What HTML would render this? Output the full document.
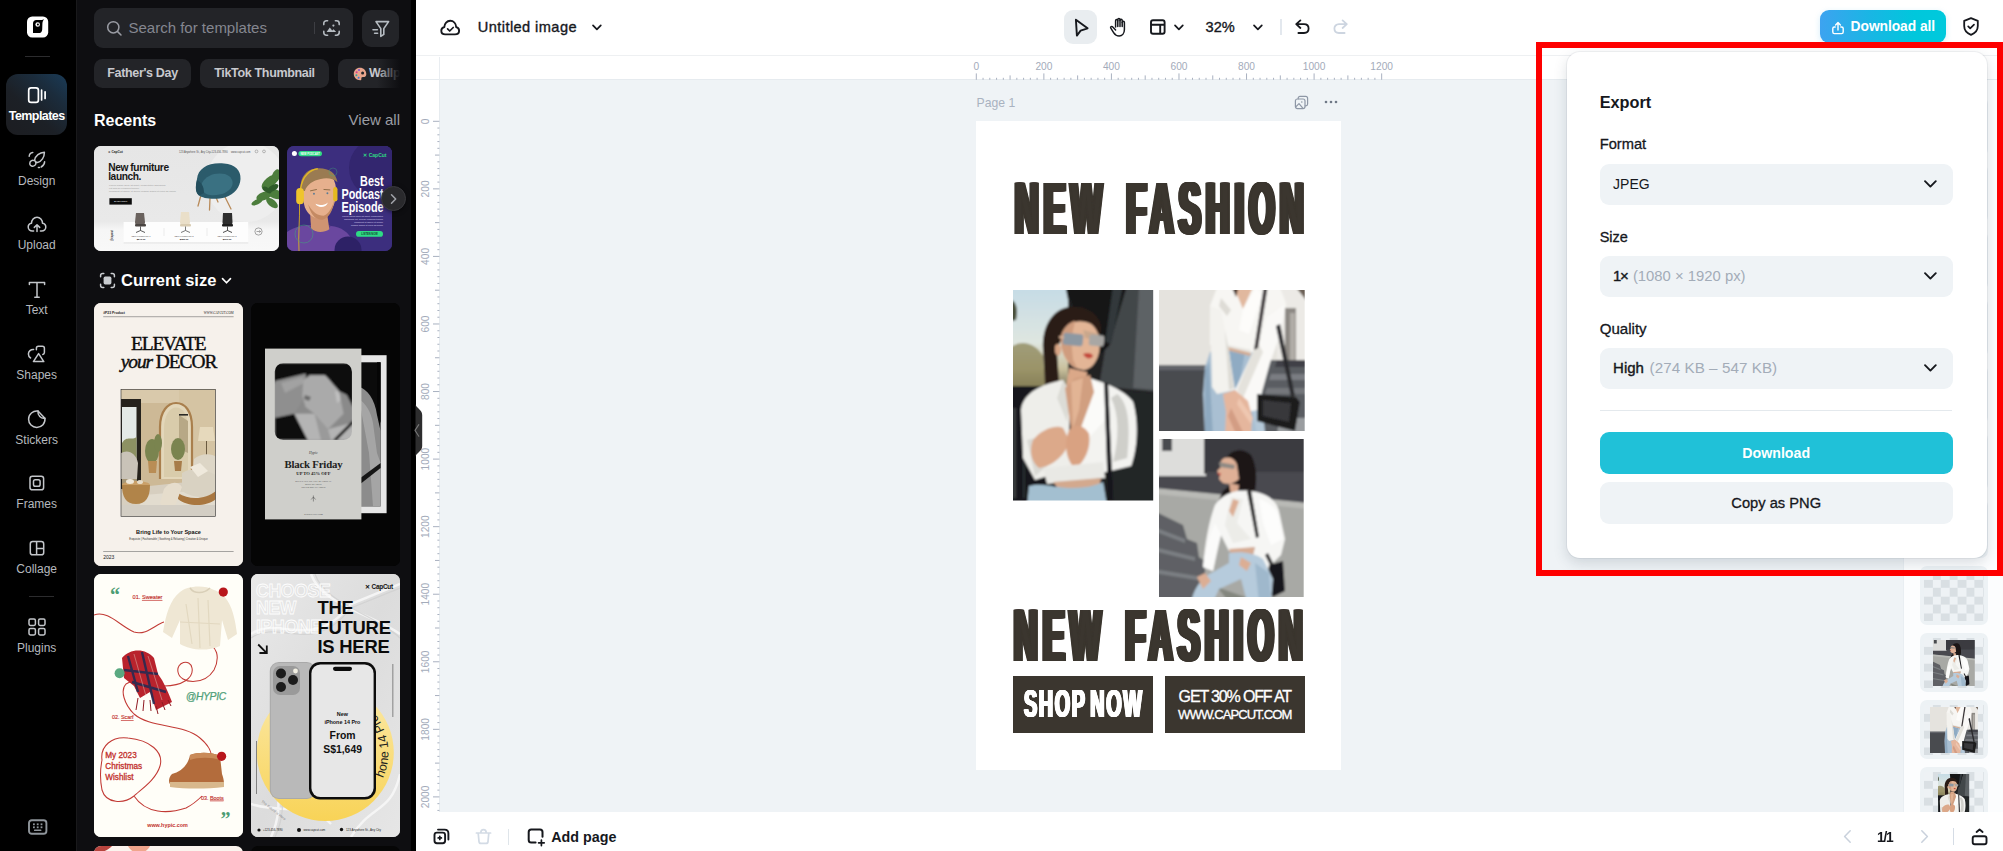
<!DOCTYPE html>
<html lang="en">
<head>
<meta charset="utf-8">
<title>Untitled image</title>
<style>
*{box-sizing:border-box;margin:0;padding:0}
html,body{width:2003px;height:851px;overflow:hidden;background:#fff}
body{position:relative;font-family:"Liberation Sans",sans-serif;color:#14161a;-webkit-font-smoothing:antialiased}
.abs{position:absolute}
svg{display:block;overflow:visible}
/* ---------- left rail ---------- */
#rail{position:absolute;left:0;top:0;width:77px;height:851px;background:#000;border-right:1px solid #19191b}
#rail .logo{position:absolute;left:27px;top:16px;width:21px;height:22px;border-radius:5px;background:#fff}
#rail .hr{position:absolute;left:25px;width:25px;height:1px;background:#2c2c2e}
.nav{position:absolute;left:0;width:73.4px;height:61px;text-align:center}
.nav .lb{position:absolute;left:0;width:73.4px;top:35px;font-size:12px;line-height:14px;color:#b6b9be;white-space:nowrap}
.nav.on{left:6px;width:61px;border-radius:12px;background:linear-gradient(222deg,#1a3b57 0%,#1b2c3c 28%,#1c2026 60%,#1c1d21 100%)}
.nav.on .lb{left:-6px;top:35px;color:#fff;font-weight:bold;font-size:12.5px;letter-spacing:-0.55px}
/* ---------- templates panel ---------- */
#panel{position:absolute;left:77px;top:0;width:339px;height:851px;background:#0e0e11;overflow:hidden}
#panel .search{position:absolute;left:17px;top:8.4px;width:259px;height:39.2px;border-radius:9px;background:#232428}
#panel .search .ph{position:absolute;left:34.5px;top:10px;font-size:15px;line-height:19px;color:#858790}
#panel .filter{position:absolute;left:284.6px;top:9.5px;width:37.6px;height:37.4px;border-radius:9px;background:#232428}
.chip{position:absolute;top:58.5px;height:29px;border-radius:8.5px;background:#232428;color:#c8c9ce;font-size:12.5px;font-weight:bold;line-height:29px;text-align:center;white-space:nowrap;letter-spacing:-0.33px}
.card{position:absolute;border-radius:7px;overflow:hidden}
/* ---------- main ---------- */
#topbar{position:absolute;left:416px;top:0;width:1587px;height:56px;background:#fff;border-bottom:1px solid #eef0f2}
#hruler{position:absolute;left:416px;top:56px;width:1587px;height:24px;background:#fff;border-bottom:1px solid #e6ebef}
#vruler{position:absolute;left:415.500px;top:80px;width:24px;height:732px;background:#fff;border-right:1px solid #e6ebef}
#canvas{position:absolute;left:440px;top:80px;width:1563px;height:732px;background:#eff3f6}
#artboard{position:absolute;left:976.2px;top:121.3px;width:364.9px;height:648.3px;background:#fff;overflow:hidden}
.tt{color:#16181d;-webkit-text-stroke:.35px #16181d;white-space:nowrap}
#bottombar{position:absolute;left:416px;top:812px;width:1587px;height:39px;background:#fff}
#thumbs{position:absolute;left:1903px;top:80px;width:100px;height:732px;background:#fcfdfe;border-left:1px solid #e9eef2;overflow:hidden}
.th{position:absolute;left:15.600px;width:68.600px;height:58.400px;border-radius:7px;background:#edf2f5;overflow:hidden}
.th .ck{position:absolute;left:4.200px;top:4.600px;width:60.400px;height:50.400px;background-color:#eef2f5;background-image:conic-gradient(#d9dfe3 25%,transparent 0 50%,#d9dfe3 0 75%,transparent 0);background-size:16.800px 16.800px}
.hl{position:absolute;font-weight:bold;font-size:75px;line-height:76px;letter-spacing:12.2px;word-spacing:11.4px;color:#3b362f;white-space:nowrap;transform:scaleX(0.4356);transform-origin:0 0;text-shadow:1.0px 0 0 #3b362f,-1.0px 0 0 #3b362f,2.0px 0 0 #3b362f,-2.0px 0 0 #3b362f,3.0px 0 0 #3b362f,-3.0px 0 0 #3b362f,4.0px 0 0 #3b362f,-4.0px 0 0 #3b362f,5.0px 0 0 #3b362f,-5.0px 0 0 #3b362f,6.0px 0 0 #3b362f,-6.0px 0 0 #3b362f;padding-left:6.6px}
.sn{position:absolute;font-weight:bold;font-size:39.5px;line-height:42px;letter-spacing:3.3px;word-spacing:-6.0px;color:#fff;white-space:nowrap;transform:scaleX(0.5);transform-origin:0 0;text-shadow:0.5px 0 0 #fff,-0.5px 0 0 #fff,1.0px 0 0 #fff,-1.0px 0 0 #fff,1.5px 0 0 #fff,-1.5px 0 0 #fff,2.0px 0 0 #fff,-2.0px 0 0 #fff;padding-left:2.0px}
/* ---------- export popover ---------- */
#pop{position:absolute;left:1566.500px;top:52.200px;width:420.300px;height:505.400px;border-radius:13px;background:#fff;box-shadow:0 5px 14px rgba(40,60,80,.17),0 0 0 1px rgba(20,40,60,.05)}
#pop .h{position:absolute;font-weight:bold;color:#16181d;white-space:nowrap}
#pop .l{position:absolute;left:33.200px;line-height:18px;color:#16181d;-webkit-text-stroke:.3px #16181d;white-space:nowrap}
#pop .sel{position:absolute;left:33.200px;width:353px;height:41.400px;border-radius:9px;background:#eff3f6;font-size:15px;line-height:40.200px;padding-left:13.400px;color:#16181d;white-space:nowrap}
#pop .sel b{font-weight:normal;-webkit-text-stroke:.4px #16181d}
#pop .sel i{font-style:normal;color:#a3acb8}
#pop .sel svg{position:absolute;right:14.500px;top:14.700px}
#pop .btn{position:absolute;left:33.200px;width:353px;border-radius:9px;text-align:center;line-height:43.600px;white-space:nowrap}
#red{position:absolute;left:1536px;top:42.300px;width:467.200px;height:534px;border:6px solid #fe0000;border-right-width:6.400px;pointer-events:none}
</style>
</head>
<body>

<!-- ================= LEFT RAIL ================= -->
<div id="rail">
  <svg class="abs" style="left:27px;top:16px" width="22" height="22" viewBox="0 0 22 22">
    <rect x="0" y="0.5" width="21.2" height="21" rx="5.2" fill="#fff"/>
    <path d="M6 17 L6 7.6 C6 5.4 7.3 4 9.4 4 L14.6 4 C15.6 4 16.4 3.6 17.1 3.1 C16.2 4.5 15.6 5.6 15.4 7.4 L15.2 13.4 C15.1 15.8 13.8 17 11.6 17 Z" fill="#000"/>
    <circle cx="10.7" cy="8.5" r="2.3" fill="#fff"/><circle cx="10.9" cy="8.5" r="1" fill="#000"/>
  </svg>
  <div class="hr" style="top:56px"></div>

  <div class="nav on" style="top:74px"><div class="lb">Templates</div></div>
  <svg class="abs ni" style="left:27px;top:85px" width="20" height="20" viewBox="0 0 20 20" fill="none" stroke="#fff" stroke-width="1.7" stroke-linecap="round">
    <rect x="1.7" y="2.9" width="9.7" height="14.4" rx="2.4"/><path d="M14.6 5.2V15M18.1 6.8V13.4"/>
  </svg>

  <div class="nav" style="top:138.7px"><div class="lb">Design</div></div>
  <svg class="abs ni" style="left:26.7px;top:149.7px" width="20" height="20" viewBox="0 0 20 20" fill="none" stroke="#c3c6ca" stroke-width="1.5" stroke-linecap="round" stroke-linejoin="round">
    <path d="M17.4 2.2C12.6 2.4 8.2 5.8 7.6 10.2C8 11.6 9 12.4 10.4 12.6C14.6 11.6 17.4 7.2 17.4 2.2Z"/>
    <path d="M7.2 10.6C5 9.8 2.8 11.2 2.8 13.4C2.8 15.2 4.2 16.4 5.8 16.2C8 16 9.4 14.2 8.8 12.2"/>
    <path d="M2.2 6.2C2.4 4 3.6 2.6 5.8 2.4M17.6 11.8C17.6 14.2 16.2 15.8 14.2 17M12.4 17.6L11.4 17.6"/>
  </svg>

  <div class="nav" style="top:203.4px"><div class="lb">Upload</div></div>
  <svg class="abs ni" style="left:26.7px;top:214.4px" width="20" height="20" viewBox="0 0 20 20" fill="none" stroke="#c3c6ca" stroke-width="1.5" stroke-linecap="round" stroke-linejoin="round">
    <path d="M6.6 17H5.4C3 17 1.2 15.3 1.2 13.1C1.2 11.2 2.6 9.6 4.5 9.3C4.5 5.9 6.9 3.2 10 3.2C13.1 3.2 15.5 5.9 15.5 9.3C17.4 9.6 18.8 11.2 18.8 13.1C18.8 15.3 17 17 14.6 17H13.4"/>
    <path d="M10 17.6V11M7.3 13.4L10 10.7L12.7 13.4"/>
  </svg>

  <div class="nav" style="top:268.1px"><div class="lb">Text</div></div>
  <svg class="abs ni" style="left:26.7px;top:279.1px" width="20" height="20" viewBox="0 0 20 20" fill="none" stroke="#c3c6ca" stroke-width="1.5" stroke-linecap="round" stroke-linejoin="round">
    <path d="M2.4 5.6V3.4H17.6V5.6M10 3.4V18M7.8 18.3H12.2"/>
  </svg>

  <div class="nav" style="top:332.8px"><div class="lb">Shapes</div></div>
  <svg class="abs ni" style="left:26.7px;top:343.8px" width="20" height="20" viewBox="0 0 20 20" fill="none" stroke="#c3c6ca" stroke-width="1.5" stroke-linecap="round" stroke-linejoin="round">
    <path d="M9.4 5.8V4.2C9.4 3 10.2 2.2 11.4 2.2H15.4C16.6 2.2 17.4 3 17.4 4.2V8.4C17.4 9.6 16.8 10.2 15.8 10.4"/>
    <path d="M6.6 5.4C3.8 5.2 1.4 7.2 1.4 10C1.4 11.8 2.2 13.2 3.6 14"/>
    <path d="M11.6 9.6L16.8 17.6H6.4Z"/>
  </svg>

  <div class="nav" style="top:397.5px"><div class="lb">Stickers</div></div>
  <svg class="abs ni" style="left:26.7px;top:408.5px" width="20" height="20" viewBox="0 0 20 20" fill="none" stroke="#c3c6ca" stroke-width="1.5" stroke-linecap="round" stroke-linejoin="round">
    <path d="M11 2.1C6 1.4 1.6 5.2 1.6 10.2C1.6 14.8 5.2 18.4 9.8 18.4C14.8 18.4 18.6 14.2 17.9 9.2"/>
    <path d="M11 2.1L17.9 9.2C14 10 10.4 6.4 11 2.1Z"/>
  </svg>

  <div class="nav" style="top:462.2px"><div class="lb">Frames</div></div>
  <svg class="abs ni" style="left:26.7px;top:473.2px" width="20" height="20" viewBox="0 0 20 20" fill="none" stroke="#c3c6ca" stroke-width="1.5" stroke-linejoin="round">
    <rect x="3" y="3.2" width="13.6" height="13.6" rx="2.4"/><rect x="6.5" y="6.7" width="6.6" height="6.6" rx="1.8"/>
  </svg>

  <div class="nav" style="top:526.9px"><div class="lb">Collage</div></div>
  <svg class="abs ni" style="left:26.7px;top:537.9px" width="20" height="20" viewBox="0 0 20 20" fill="none" stroke="#c3c6ca" stroke-width="1.5" stroke-linejoin="round">
    <rect x="3.3" y="3.6" width="13.4" height="13.2" rx="2.4"/><path d="M9.6 3.6V16.8M9.6 10.4H16.7"/>
  </svg>

  <div class="hr" style="top:596px;left:29px"></div>

  <div class="nav" style="top:604.2px"><div class="lb" style="top:36.400px">Plugins</div></div>
  <svg class="abs ni" style="left:26.7px;top:616.5px" width="20" height="20" viewBox="0 0 20 20" fill="none" stroke="#c3c6ca" stroke-width="1.5" stroke-linejoin="round">
    <rect x="2" y="2" width="6.4" height="6.4" rx="1.4"/><rect x="11.6" y="2" width="6.4" height="6.4" rx="1.4"/><rect x="2" y="11.6" width="6.4" height="6.4" rx="1.4"/><rect x="11.6" y="11.6" width="6.4" height="6.4" rx="1.4"/>
  </svg>

  <svg class="abs" style="left:27px;top:818px" width="22" height="18" viewBox="0 0 22 18" fill="none" stroke="#8f959b" stroke-width="1.9" stroke-linejoin="round">
    <rect x="2" y="2.2" width="17.4" height="13.6" rx="2.8"/>
    <g stroke="none" fill="#8f959b"><rect x="6" y="5.4" width="1.8" height="1.8"/><rect x="9.8" y="5.4" width="1.8" height="1.8"/><rect x="13.6" y="5.4" width="1.8" height="1.8"/><rect x="6" y="8.4" width="1.8" height="1.8"/><rect x="9.8" y="8.4" width="1.8" height="1.8"/><rect x="13.6" y="8.4" width="1.8" height="1.8"/><rect x="7" y="11.4" width="7.4" height="1.6" rx=".6"/></g>
  </svg>
</div>

<!-- ================= TEMPLATES PANEL ================= -->
<div id="panel">
  <div class="search"><div class="ph">Search for templates</div>
    <svg class="abs" style="left:11px;top:11px" width="20" height="20" viewBox="0 0 20 20" fill="none" stroke="#9a9ca4" stroke-width="1.5" stroke-linecap="round"><circle cx="8.3" cy="8.3" r="5.6"/><path d="M12.6 12.6L16 16"/></svg>
    <div class="abs" style="left:220px;top:14px;width:1px;height:12px;background:#3d3e43"></div>
    <svg class="abs" style="left:228px;top:11px" width="19" height="19" viewBox="0 0 19 19" fill="none" stroke="#b6bcc2" stroke-width="1.6" stroke-linecap="round"><path d="M1.8 5.6V4.4C1.8 2.8 2.8 1.8 4.4 1.8H5.6M13.4 1.8H14.6C16.2 1.8 17.2 2.8 17.2 4.4V5.6M17.2 12.4V13.6C17.2 15.2 16.2 16.2 14.6 16.2H13.4M5.6 16.2H4.4C2.8 16.2 1.8 15.2 1.8 13.6V12.4"/><circle cx="11.4" cy="6.6" r="1.1" fill="#b6bcc2" stroke="none"/><path d="M4.6 13L7.8 8.6L10.2 11.4L11.6 10.2L14.2 13Z" fill="#b6bcc2" stroke="none"/></svg>
  </div>
  <div class="filter">
    <svg class="abs" style="left:9px;top:9px" width="20" height="20" viewBox="0 0 20 20" fill="none" stroke="#b6bcc2" stroke-width="1.6" stroke-linecap="round" stroke-linejoin="round"><path d="M5 2.6H17.6L12.8 9.6V15.4L9.8 17.4V9.6Z"/><path d="M2 10.8H6.4M3.6 14.2H6.6"/></svg>
  </div>
  <div class="chip" style="left:17px;width:97px">Father's Day</div>
  <div class="chip" style="left:123px;width:129px">TikTok Thumbnail</div>
  <div class="chip" style="left:261px;width:90px;text-align:left;padding-left:31px">Wallpaper
    <svg class="abs" style="left:15px;top:8px" width="14" height="14" viewBox="0 0 14 14"><path d="M7 .8C3.4.8.8 3.5.8 7s2.800 6.200 6.300 6.200c1 0 1.500-.7 1.300-1.500-.3-1 .3-1.800 1.300-1.800h1.500c1.400 0 2.100-1.200 2.100-2.900C13.300 3.500 10.500.8 7 .8z" fill="#e9a58c"/><circle cx="9.600" cy="6" r="1.500" fill="#232428"/><circle cx="3.600" cy="5.200" r="1" fill="#d43f8d"/><circle cx="6" cy="3" r="1" fill="#7b4fd0"/><circle cx="3.400" cy="8.300" r="1" fill="#2aa6a0"/><circle cx="5.600" cy="10.800" r="1" fill="#3d7bd8"/></svg>
  </div>
  <div class="abs" style="left:300px;top:56px;width:39px;height:34px;background:linear-gradient(90deg,rgba(14,14,17,0) 0,#0e0e11 23px)"></div>
  <div class="abs" style="left:17px;top:111px;font-size:16px;font-weight:bold;color:#fff;line-height:20px">Recents</div>
  <div class="abs" style="right:16px;top:111px;font-size:15px;color:#9b9da4;line-height:18px">View all</div>
  <div class="card" id="rc1" style="left:17px;top:146px;width:185.4px;height:105px;background:#e9e9e9">
  <svg width="186" height="105" viewBox="0 0 186 105" font-family="Liberation Sans, sans-serif">
    <defs><linearGradient id="g1" x1="0" y1="0" x2="0" y2="1"><stop offset="0" stop-color="#e6e6e6"/><stop offset=".72" stop-color="#e9e9e9"/><stop offset=".8" stop-color="#f6f6f6"/><stop offset="1" stop-color="#f8f8f8"/></linearGradient></defs>
    <rect width="186" height="105" fill="url(#g1)"/>
    <circle cx="152" cy="36" r="40" fill="#eeeeee"/>
    <text x="13.500" y="7.200" font-size="3.200" font-weight="bold" fill="#222">✕ CapCut</text>
    <text x="85" y="7" font-size="2.600" fill="#555">123 Anywhere St., Any City</text><text x="116" y="7" font-size="2.600" fill="#555">+123-456-7890</text><text x="137" y="7" font-size="2.600" fill="#555">www.capcut.com</text>
    <circle cx="162.500" cy="5.400" r="1.400" fill="none" stroke="#666" stroke-width=".4"/><circle cx="170" cy="5.400" r="1.400" fill="none" stroke="#666" stroke-width=".4"/>
    <text x="14.200" y="25.400" font-size="10.200" font-weight="bold" fill="#161616" letter-spacing="-.4">New furniture</text>
    <text x="14.200" y="34.400" font-size="10.200" font-weight="bold" fill="#161616" letter-spacing="-.4">launch.</text>
    <g fill="#9a9a9a" font-size="2.500"><text x="15" y="40">Lorem ipsum dolor sit amet, consectetur adipiscing</text><text x="15" y="43">elit sed do eiusmod tempor</text><text x="15" y="46">incididunt ut labore et dolore magna aliqua ut enim ad minim</text></g>
    <rect x="15.400" y="52.200" width="22.400" height="6.400" fill="#0c0c0c"/><text x="26.600" y="56.400" font-size="2.400" fill="#fff" text-anchor="middle">SHOP NOW</text>
    <!-- armchair -->
    <g stroke="#b98b5a" stroke-width="1.300" stroke-linecap="round"><path d="M107 49L104 60M116 52L115.500 64M131 51L137 63M121 49L124 56"/></g>
    <path d="M103 33C104 22 115 16 130 17.500C141 18.500 147 24 146.500 33C146 41 141 48 131 51.500C122 54 109 53 104.500 49C100.500 45 102 39 103 33Z" fill="#2b5b6b"/>
    <path d="M108 37C112 29 122 26 131 28C137 30 140 35 138 40C135 47 125 50 116 49C109 48 106 43 108 37Z" fill="#3a7182"/>
    <path d="M103 34C107 36 110 40 110 47L105 49.500C101 46 101.500 39 103 34Z" fill="#234e5d"/>
    <!-- plant -->
    <g fill="#4c7d3c"><ellipse cx="176" cy="36" rx="10" ry="5" transform="rotate(-40 176 36)"/><ellipse cx="181" cy="48" rx="9" ry="4.500" transform="rotate(20 181 48)"/><ellipse cx="170" cy="50" rx="8" ry="4" transform="rotate(-20 170 50)"/><ellipse cx="182" cy="30" rx="7" ry="4" transform="rotate(-70 182 30)"/><ellipse cx="163" cy="56" rx="6" ry="2.600" transform="rotate(-25 163 56)"/><ellipse cx="178" cy="57" rx="7" ry="3.500" transform="rotate(40 178 57)"/></g>
    <g fill="#2f5c2a"><ellipse cx="179" cy="42" rx="6" ry="3" transform="rotate(-30 179 42)"/><ellipse cx="173" cy="44" rx="5" ry="2.400" transform="rotate(30 173 44)"/></g>
    <!-- product strip -->
    <rect x="29.600" y="76" width="124.600" height="20.400" fill="#fdfdfd"/>
    <rect x="29.600" y="96.400" width="124.600" height="1" fill="#dcdcdc" opacity=".7"/>
    <path d="M70 82V90M113 82V90" stroke="#d8d8d8" stroke-width=".5"/>
    <g><path d="M42 67h8l1 9c0 2-1 3.500-5 3.500s-5-1.500-5-3.500z" fill="#6a625e"/><rect x="41" y="78" width="11" height="2.600" rx="1" fill="#4a4542"/><path d="M46.500 80.500v4M42 86.500l4.500-2 4.500 2" stroke="#333" stroke-width=".8" fill="none"/></g>
    <g><path d="M87 66h8l1 10c0 2-1 3.500-5 3.500s-5-1.500-5-3.500z" fill="#eadfc9"/><rect x="86" y="78" width="11" height="2.600" rx="1" fill="#d9ccb2"/><path d="M91.500 80.500v4M87 86.500l4.500-2 4.500 2" stroke="#555" stroke-width=".8" fill="none"/></g>
    <g><path d="M129 67h9l.5 9c0 2-1 3.500-5 3.500s-5-1.500-5-3.500z" fill="#2e2e2e"/><rect x="128" y="78" width="11" height="2.600" rx="1" fill="#1d1d1d"/><path d="M133.500 80.500v4M129 86.500l4.500-2 4.500 2" stroke="#222" stroke-width=".8" fill="none"/></g>
    <g font-size="2.300" fill="#555" text-anchor="middle"><text x="47" y="90.500">NEW PRODUCT 1</text><text x="90" y="90.500">NEW PRODUCT 2</text><text x="133" y="90.500">NEW PRODUCT 3</text></g>
    <g font-size="2.400" fill="#111" font-weight="bold" text-anchor="middle"><text x="47" y="93.800">$240.99</text><text x="90" y="93.800">$180.99</text><text x="133" y="93.800">$199.99</text></g>
    <circle cx="164.500" cy="85.500" r="3.600" fill="none" stroke="#555" stroke-width=".5"/><path d="M162.500 85.500h4M165.300 84.300l1.200 1.200-1.200 1.200" stroke="#555" stroke-width=".5" fill="none"/>
    <text transform="translate(18.500 95) rotate(-90)" font-size="2.600" font-weight="bold" fill="#222">@capcut</text>
  </svg></div>
  <div class="card" id="rc2" style="left:210.400px;top:146px;width:104.800px;height:105px;background:#3b2d7d">
  <svg width="105" height="105" viewBox="0 0 105 105" font-family="Liberation Sans, sans-serif">
    <rect width="105" height="105" fill="#3c2e7e"/>
    <circle cx="92" cy="22" r="30" fill="#33266f"/>
    
    <!-- shirt -->
    <path d="M0 86C8 80 18 79 26 79L44 80C54 81 62 86 66 96L68 105H0Z" fill="#6a479f"/>
    <path d="M22 80C28 86 38 86 44 80L40 78L26 78Z" fill="#5a3b8a"/>
    <g transform="translate(2 6.500) scale(.96)">
    <!-- neck/face -->
    <path d="M22 64L40 66L42 80C36 84 28 84 23 79Z" fill="#cf9472"/>
    <path d="M14 40C13 27 21 20 31 20C43 20 50 28 49 42C48.500 54 44 64 36 68C29 71 20 66 16.500 57C15 52 14.300 46 14 40Z" fill="#e6b08d"/>
    <path d="M13 40C10 28 17 17 30 16.500C41 16 49 21 50.500 31C46 27 40 26 33 27.500C25 29 19 33 16.500 40Z" fill="#9a7b52"/>
    <path d="M20 54C24 62 30 66 36 66C41 64 45 58 47 50C46 60 42 68 35 70C27 71 22 63 20 54Z" fill="#c48a63"/>
    <path d="M27.500 53.500C31 55.500 37 55 40.500 52C39 57.500 30 58.500 27.500 53.500Z" fill="#fff"/>
    <path d="M22 40l7-1.500M36 38.500l7 .5" stroke="#8a6a45" stroke-width="1" fill="none"/>
    <circle cx="26" cy="43" r="1" fill="#5b7c96"/><circle cx="40" cy="42.500" r="1" fill="#5b7c96"/>
    <!-- headphones -->
    <path d="M12 38C14 24 22 18 30 17" fill="none" stroke="#e0b628" stroke-width="1.600"/>
    <rect x="7.500" y="37" width="8" height="17" rx="4" fill="#efc42c"/>
    <rect x="46" y="36" width="4.500" height="15" rx="2.200" fill="#e5b820"/>
    </g>
    <circle cx="61" cy="104" r="13.500" fill="#2d2166"/>
    <path d="M12.500 58C13 72 11 90 12 105" fill="none" stroke="#d9b022" stroke-width=".9"/>
    <circle cx="17" cy="88" r="9" fill="none" stroke="#3fae7a" stroke-width=".6" opacity=".8"/>
    <circle cx="46" cy="26" r="4" fill="none" stroke="#3fae7a" stroke-width=".5" opacity=".7"/>
    <!-- text -->
    <circle cx="7.400" cy="7.600" r="2.500" fill="#fff"/><rect x="11.400" y="5" width="23.600" height="5.200" rx="2.600" fill="#2edb84"/>
    <text x="23.200" y="8.800" font-size="2.600" fill="#fff" text-anchor="middle" font-weight="bold">NEW PODCAST</text>
    <text x="99.500" y="10.600" font-size="5" font-weight="bold" fill="#2edb84" text-anchor="end">✕ CapCut</text>
    <g fill="#fff" font-weight="bold" font-size="15.500" text-anchor="end" transform="translate(96.600 0) scale(.7 1)"><text x="0" y="39.800">Best</text><text x="0" y="53">Podcast</text><text x="0" y="66.200">Episode</text></g>
    <g fill="#d8d2ee" font-size="2.300" text-anchor="end"><text x="96" y="71">Lorem ipsum dolor sit amet, consectetur</text><text x="96" y="74">adipiscing elit, sed do eiusmod tempor</text><text x="96" y="77">incididunt ut labore et dolore</text><text x="96" y="80">magna aliqua ut enim ad minim</text></g>
    <rect x="69" y="85" width="27" height="5.800" rx="2.900" fill="#2edb84"/><text x="82.500" y="89.100" font-size="2.600" fill="#143" text-anchor="middle" font-weight="bold">LISTEN NOW</text>
  </svg></div>
  <div class="abs" style="left:303.500px;top:186px;width:25px;height:25px;border-radius:50%;background:#2a2a2d;border:1px solid #3a3a3e;box-shadow:0 1px 4px rgba(0,0,0,.5)">
    <svg class="abs" style="left:7.500px;top:5.500px" width="9" height="12" viewBox="0 0 9 12" fill="none" stroke="#a2a4aa" stroke-width="1.500" stroke-linecap="round" stroke-linejoin="round"><path d="M2.500 1.800L6.700 6L2.500 10.200"/></svg>
  </div>
  <svg class="abs" style="left:21.500px;top:272px" width="17" height="17" viewBox="0 0 17 17" fill="none" stroke="#c9ccd0" stroke-width="1.500" stroke-linecap="round"><path d="M1.600 4.800V3.600C1.600 2.400 2.400 1.600 3.600 1.600H4.800M12.200 1.600H13.400C14.600 1.600 15.400 2.400 15.400 3.600V4.800M15.400 12.200V13.400C15.400 14.600 14.600 15.400 13.400 15.400H12.200M4.800 15.400H3.600C2.400 15.400 1.600 14.600 1.600 13.400V12.200"/><rect x="4.600" y="4.600" width="7.800" height="7.800" rx="1.600" fill="#c9ccd0" stroke="none"/></svg>
  <svg class="abs" style="left:143.500px;top:276.500px" width="11" height="8" viewBox="0 0 11 8" fill="none" stroke="#fff" stroke-width="1.600" stroke-linecap="round" stroke-linejoin="round"><path d="M1.500 1.600L5.500 5.800L9.500 1.600"/></svg>
  <div class="abs" style="left:44px;top:270px;font-size:16.5px;font-weight:bold;color:#fff;line-height:20px">Current size</div>
  <div class="card" id="c1" style="left:16.800px;top:303px;width:149px;height:263.300px;background:#f6f1eb">
  <svg width="149" height="264" viewBox="0 0 149 264" font-family="Liberation Sans, sans-serif">
    <rect width="149" height="264" fill="#f6f1eb"/>
    <text x="9.200" y="10.600" font-size="3.400" font-weight="bold" fill="#222">#P23 Product</text>
    <text x="139.600" y="10.600" font-size="3.200" fill="#222" text-anchor="end" font-family="Liberation Serif, serif">WWW.CAPCUT.COM</text>
    <rect x="9.200" y="13.600" width="130.400" height=".5" fill="#555"/>
    <text x="74.300" y="47" font-size="19.400" fill="#0d0d0d" text-anchor="middle" font-family="Liberation Serif, serif" letter-spacing="-1.150" stroke="#0d0d0d" stroke-width=".4">ELEVATE</text>
    <text x="74.500" y="65.200" font-size="19.400" fill="#0d0d0d" text-anchor="middle" font-family="Liberation Serif, serif" letter-spacing="-1.050" stroke="#0d0d0d" stroke-width=".4"><tspan font-style="italic">your</tspan> DECOR</text>
    <!-- room photo -->
    <g>
      <clipPath id="c1p"><rect x="27" y="86.300" width="94.400" height="127"/></clipPath>
      <filter id="c1b"><feGaussianBlur stdDeviation=".7"/></filter><g clip-path="url(#c1p)"><g filter="url(#c1b)">
        <rect x="20" y="80" width="110" height="140" fill="#cdb996"/>
        <rect x="27" y="86" width="95" height="14" fill="#d9c9ab"/>
        <rect x="85" y="86" width="37" height="90" fill="#d5c4a3"/>
        <!-- window -->
        <rect x="27" y="96" width="20" height="90" fill="#26221d"/>
        <rect x="28" y="104" width="14.500" height="78" fill="#e4e9e6"/>
        <path d="M28 140C33 132 38 138 42.500 134V182H28Z" fill="#8d9163"/>
        <path d="M28 160h14.500v22H28z" fill="#a89878"/>
        <!-- floor -->
        <path d="M27 186L122 176V214H27Z" fill="#d7cfc0"/>
        <path d="M50 192L122 186V214H40Z" fill="#e2dccf"/>
        <!-- mirror -->
        <path d="M66 176V124C66 108 74 100 82 100C91 100 98 108 98 124V176" fill="#e3d7ba" stroke="#a97f4d" stroke-width="2.200"/>
        <path d="M70 174V126C70 112 76 104.500 82 104.500C89 104.500 94 112 94 126V174Z" fill="#d9ccab"/>
        <path d="M85 112L94 118V150L85 146Z" fill="#b7a886"/>
        <rect x="85" y="111" width="9" height="1.600" fill="#2c2a25"/>
        <!-- plants -->
        <g fill="#7a8450"><ellipse cx="58" cy="148" rx="7" ry="12"/><ellipse cx="84" cy="146" rx="7" ry="11"/><ellipse cx="64" cy="140" rx="4" ry="9"/></g>
        <path d="M54 158h9l-1 12h-7z" fill="#b98d55"/><path d="M80 158h8l-1 10h-6z" fill="#a77c48"/>
        <!-- lamp -->
        <path d="M106 124h13l2 14h-17z" fill="#e6d9bc"/><rect x="112" y="138" width="1" height="22" fill="#6b5a40"/>
        <!-- sofa right -->
        <path d="M100 156C106 150 118 150 122 154V182H98Z" fill="#ddd6c6"/>
        <path d="M88 170C96 164 112 166 122 172V192C110 196 96 194 88 188Z" fill="#d9d2c2"/>
        <path d="M96 164l10-4 8 8-10 6z" fill="#efe9dc"/>
        <path d="M84 190C96 198 112 196 122 188V196C112 204 94 204 84 196Z" fill="#a9773f"/>
        <path d="M70 186C76 178 84 178 88 184L80 206C74 208 68 204 66 200Z" fill="#e6ddcc"/>
        <!-- left chair -->
        <path d="M27 150C34 146 42 150 44 160L43 176H27Z" fill="#c9c3b8"/>
        <!-- rattan table -->
        <ellipse cx="42" cy="182" rx="14" ry="4" fill="#caa068"/>
        <path d="M28 182C28 194 32 201 42 201C52 201 56 194 56 182Z" fill="#b1844a"/>
        <ellipse cx="36" cy="178.500" rx="4" ry="2.500" fill="#efe8da"/><ellipse cx="46" cy="179" rx="3" ry="2" fill="#e6dcc9"/>
        <path d="M20 202H130V220H20Z" fill="#d3cec4"/>
      </g></g>
      <rect x="27" y="86.300" width="94.400" height="127" fill="none" stroke="#2a2a2a" stroke-width=".6"/>
    </g>
    <text x="74.500" y="231.400" font-size="5.600" font-weight="bold" fill="#111" text-anchor="middle">Bring Life to Your Space</text>
    <text x="74.500" y="236.800" font-size="2.700" fill="#333" text-anchor="middle">Exquisite | Fashionable | Soothing &amp; Relaxing | Creative &amp; Unique</text>
    <rect x="9.200" y="248" width="130.400" height=".5" fill="#555"/>
    <text x="9.200" y="256" font-size="5" fill="#222">2023</text>
  </svg></div>
  <div class="card" id="c2" style="left:174.200px;top:303px;width:148.600px;height:263.300px;background:#050505">
  <svg width="149" height="264" viewBox="0 0 149 264" font-family="Liberation Serif, serif">
    <rect width="149" height="264" fill="#050505"/>
    <!-- back frame -->
    <rect x="108" y="52.200" width="27.600" height="158" fill="#e6e6e6"/>
    <rect x="108" y="59.300" width="21.600" height="144" fill="#0b0b0b"/>
    <path d="M108 84C116 86 124 96 126 112L129.600 128V203.300H108Z" fill="#8c8c8c"/>
    <path d="M108 96C114 100 120 108 122 120L126 150L129.600 160V203.300H122L118 150Z" fill="#a5a5a5"/>
    <path d="M108 176L129.600 160V165L108 182Z" fill="#151515"/>
    <path d="M126 59.300H129.600V120L126 110Z" fill="#050505"/>
    <!-- front paper -->
    <rect x="14" y="45.600" width="96.400" height="170.800" fill="#cfcfcb"/>
    <clipPath id="c2p"><rect x="23.700" y="60.200" width="77.300" height="76.800" rx="8.500"/></clipPath><filter id="c2b"><feGaussianBlur stdDeviation="1.100"/></filter>
    <g clip-path="url(#c2p)"><g filter="url(#c2b)">
      <rect x="23" y="60" width="79" height="78" fill="#8a8a8a"/>
      <path d="M23 60H102V104L96 92L88 88L74 72L58 72L50 80L40 78L30 82L23 80Z" fill="#0d0d0d"/>
      <path d="M23.800 78L54.600 70.500L56.800 88.300L43.400 110.700L23.800 115Z" fill="#8f8f8f"/>
      <path d="M30 80L52 74L53 80L34 90Z" fill="#a2a2a2"/>
      <path d="M52.400 77L60 72.700H74.700L88 88.300L92.600 110.700L77 126.300L63.500 110.700L54.600 104L51.300 92.800Z" fill="#aaaaaa"/>
      <path d="M74 72L88 84L96 92L102 104V60H70Z" fill="#0d0d0d"/>
      <path d="M84 88C88 88 90 92 89 98L86 100Z" fill="#c0c0c0"/>
      <path d="M54 92L60 94L58 98L53 96Z" fill="#6a6a6a"/>
      <path d="M23.800 115L43.400 110.700L56.800 137H23.800Z" fill="#0a0a0a"/>
      <path d="M43.400 110.700L63.500 110.700L77 126.300L102 119.600V137H56.800Z" fill="#b4b4b4"/>
      <path d="M63.500 110.700L77 126.300L80 137H70Z" fill="#9a9a9a"/>
      <path d="M102 117L82 137H86L102 121Z" fill="#111"/>
    </g></g>
    <text x="62.400" y="151.400" font-size="3.600" font-style="italic" fill="#333" text-anchor="middle">Hypic</text>
    <text x="62.400" y="165.400" font-size="10.800" font-weight="bold" fill="#222" text-anchor="middle" letter-spacing="-.2">Black Friday</text>
    <text x="62.400" y="171.800" font-size="4.600" fill="#1c1c1c" text-anchor="middle" font-weight="bold">UP TO 45% OFF</text>
    <g font-size="2.500" fill="#333" text-anchor="middle"><text x="62.400" y="178.600">RELEVANT TO ANY SEASONAL</text><text x="62.400" y="181.600">BEST SEARCH</text><text x="62.400" y="184.600">OFFER BIG CLASSES</text></g>
    <path d="M62.400 192.500v6M60.200 196.500l2.200-2.500 2.200 2.500" stroke="#444" stroke-width=".5" fill="none"/>
    <text x="62.400" y="211.600" font-size="2.200" fill="#333" text-anchor="middle">WWW.HYPIC.COM</text>
  </svg></div>
  <div class="card" id="c3" style="left:16.800px;top:574.400px;width:149px;height:262.800px;background:#fffef8">
  <svg width="149" height="263" viewBox="0 0 149 263" font-family="Liberation Sans, sans-serif">
    <rect width="149" height="263" fill="#fffef8"/>
    <path d="M0 41C14 36 26 52 40 58C52 62 62 50 70 48M110 70C124 70 126 84 120 96C110 112 86 110 84 98C82 88 96 84 98 94C100 104 88 112 70 112C52 112 40 104 32 110C26 116 30 130 40 140C56 154 90 150 106 164C118 174 120 184 114 192M8 186C6 172 18 162 34 164C56 166 70 178 66 192C62 206 46 216 40 222C52 240 74 240 92 234C100 230 104 226 108 222M40 222C30 230 12 230 8 216C6 206 6 196 8 186" fill="none" stroke="#c23a35" stroke-width="1.050"/>
    <text x="16" y="28" font-size="20" font-weight="bold" fill="#4c9d74" font-family="Liberation Serif, serif">“</text>
    <text x="38.600" y="25" font-size="5.600" fill="#c2302c" stroke="#c2302c" stroke-width=".15">01. <tspan text-decoration="underline">Sweater</tspan></text>
    <!-- sweater -->
    <path d="M86 18C92 12 110 10 120 16C132 20 140 32 143 60L134 66L128 46L126 72C112 78 96 76 86 70L86 46L78 64L69 58C72 40 76 26 86 18Z" fill="#efe7d4"/>
    <path d="M96 14C100 20 110 20 116 14" fill="none" stroke="#d9cfb8" stroke-width="1.500"/>
    <path d="M92 30L98 70M104 24L106 74M114 26L116 72M86 48L126 50" stroke="#e2d8c0" stroke-width="1.200" fill="none"/>
    <circle cx="129.300" cy="18.100" r="4.600" fill="#b8161b"/>
    <!-- scarf -->
    <path d="M28 84C36 74 52 74 60 84L64 100C70 108 74 118 78 128L62 136L56 118L46 124L40 112L30 104Z" fill="#b9232d"/>
    <path d="M34 82L44 118M48 78L60 130M30 96L64 100M38 108L72 118" stroke="#1e2a55" stroke-width="2.400" fill="none" opacity=".85"/>
    <path d="M40 80L52 122M54 82L68 126" stroke="#e8e0d0" stroke-width=".5" fill="none" opacity=".8"/>
    <path d="M44 124l-2 12M50 126l-1 11M56 126l1 11M62 132l2 8M68 128l3 8M74 126l3 6" stroke="#8f1a22" stroke-width="1" fill="none"/>
    <circle cx="25.600" cy="99.200" r="5" fill="#5aa981"/>
    <text x="91.700" y="126.400" font-size="10.400" font-style="italic" fill="#4fa078" letter-spacing="-.35" stroke="#4fa078" stroke-width=".25">@HYPIC</text>
    <text x="18" y="145.400" font-size="5.400" fill="#c2302c" stroke="#c2302c" stroke-width=".15">02. <tspan text-decoration="underline">Scarf</tspan></text>
    <g font-size="8.200" fill="#c2302c" stroke="#c2302c" stroke-width=".3"><text x="11.300" y="184.200">My 2023</text><text x="11.300" y="195.100">Christmas</text><text x="11.300" y="206">Wishlist</text></g>
    <!-- boot -->
    <path d="M96 181C104 178 118 178 126 182L128 200C130 206 131 210 128 213L78 212C74 210 74 204 78 200C86 198 94 192 96 181Z" fill="#b36c3c"/>
    <path d="M76 208H130V213C112 215 92 215 76 213Z" fill="#d8b88c"/>
    <path d="M96 181C104 178 118 178 126 182L126 186C118 183 104 183 96 186Z" fill="#c98a58"/>
    <circle cx="127.600" cy="182.300" r="4.600" fill="#b8161b"/>
    <text x="107" y="225.600" font-size="5.400" fill="#c2302c" stroke="#c2302c" stroke-width=".15">03. <tspan text-decoration="underline">Boots</tspan></text>
    <text x="126.500" y="252" font-size="20" font-weight="bold" fill="#4c9d74" font-family="Liberation Serif, serif">”</text>
    <text x="73.500" y="252.800" font-size="5.400" font-weight="bold" fill="#c2302c" text-anchor="middle">www.hypic.com</text>
  </svg></div>
  <div class="card" id="c4" style="left:174.200px;top:574.400px;width:148.600px;height:262.800px;background:#e3e3e3">
  <svg width="149" height="263" viewBox="0 0 149 263" font-family="Liberation Sans, sans-serif">
    <defs><linearGradient id="g4" x1="0" y1="0" x2="1" y2="1"><stop offset="0" stop-color="#e9e9e9"/><stop offset=".5" stop-color="#dcdcdc"/><stop offset="1" stop-color="#e6e6e6"/></linearGradient>
    <linearGradient id="g4y" x1="0" y1="0" x2="0" y2="1"><stop offset="0" stop-color="#fbe9a8"/><stop offset="1" stop-color="#f8d357"/></linearGradient></defs>
    <rect width="149" height="263" fill="url(#g4)"/>
    <g stroke="#f6f6f6" stroke-width="2.500" fill="none" opacity=".9"><path d="M0 60C30 40 60 80 100 30L149 10M20 263C40 220 10 200 40 150M100 263C120 230 140 240 149 200M60 0C70 30 120 40 149 60M0 230C30 240 60 228 80 250"/></g>
    <g stroke="#cfcfcf" stroke-width="1.200" fill="none" opacity=".8"><path d="M0 64C30 44 60 84 100 34L149 14M24 263C44 220 14 200 44 150M64 0C74 30 124 40 149 64"/></g>
    <circle cx="74.300" cy="178.500" r="68.500" fill="url(#g4y)"/>
    <g font-size="17.600" font-weight="bold" fill="none" stroke="#fdfdfd" stroke-width=".8" letter-spacing="-.3"><text x="5" y="22.600">CHOOSE</text><text x="5" y="40.400">NEW</text><text x="5" y="58.500">IPHONE</text></g>
    <text x="142" y="15.400" font-size="6.400" font-weight="bold" fill="#111" text-anchor="end" letter-spacing="-.2">✕ CapCut</text>
    <g font-size="18.400" font-weight="bold" fill="#0b0b0b" letter-spacing="-.2"><text x="66.400" y="40.400">THE</text><text x="66.400" y="59.500">FUTURE</text><text x="66.400" y="78.700">IS HERE</text></g>
    <path d="M7.200 70.500L15 78.300M8.400 79H15.800V71.600" stroke="#111" stroke-width="1.800" fill="none"/>
    <rect x="141.600" y="90" width=".6" height="53" fill="#444"/><rect x="5" y="167" width=".6" height="53" fill="#444"/>
    <!-- curved text -->
    <path id="arc4" d="M131.9 204.1A63 63 0 0 0 110.4 126.9" fill="none"/>
    <text font-size="12.400" fill="#1e1e1e"><textPath href="#arc4">hone 14 Pro</textPath></text>
    <!-- phone back -->
    <rect x="18.800" y="88" width="46" height="137" rx="9" fill="#a9a9a9"/>
    <rect x="19.800" y="89" width="44" height="135" rx="8" fill="#b9b9b9"/>
    <rect x="22" y="92" width="27" height="29" rx="7" fill="#9a9a9a"/>
    <circle cx="30" cy="99.500" r="5" fill="#1c1c1c"/><circle cx="42" cy="106" r="5" fill="#1c1c1c"/><circle cx="30" cy="113" r="5" fill="#1c1c1c"/><circle cx="44.500" cy="97" r="2.400" fill="#f2efe2"/>
    <!-- phone front -->
    <rect x="58" y="88" width="67" height="137.500" rx="11" fill="#0c0c0c"/>
    <rect x="60.400" y="90.400" width="62.200" height="132.700" rx="9" fill="#e7e7e7"/>
    <rect x="82" y="92.700" width="19" height="4.200" rx="2.100" fill="#0c0c0c"/>
    <g text-anchor="middle" font-weight="bold" fill="#111"><text x="91.400" y="141.500" font-size="5.400">New</text><text x="91.400" y="149.600" font-size="5.400">iPhone 14 Pro</text><text x="91.600" y="165" font-size="10.400">From</text><text x="91.600" y="179" font-size="10.400">S$1,649</text></g>
    <text transform="translate(10 228) rotate(38)" font-size="3.600" fill="#8a8a8a">The Future is Here</text>
    <g font-size="2.900" fill="#222"><circle cx="8" cy="256" r="1.600" fill="#111"/><text x="12" y="257">+123-456-7890</text><circle cx="48" cy="256" r="2" fill="#111"/><text x="52.500" y="257">www.capcut.com</text><circle cx="90.500" cy="255.500" r="1.700" fill="#111"/><text x="95" y="257">123 Anywhere St., Any City</text></g>
  </svg></div>
  <div class="card" id="c5" style="left:16.800px;top:845.500px;width:149px;height:20px;background:#fbf4ee">
    <svg width="149" height="10" viewBox="0 0 149 10"><path d="M0 0h18C14 4 8 7 0 8Z" fill="#b8443e"/><path d="M34 0h22C54 4 50 7 45 7S36 4 34 0Z" fill="#f0a58c"/></svg>
  </div>
  <div class="card" id="c6" style="left:174.200px;top:845.500px;width:148.600px;height:20px;background:#060606"></div>
</div>

<!-- ================= MAIN ================= -->
<div id="topbar">
  <svg class="abs" style="left:22.500px;top:17.500px" width="22" height="19" viewBox="0 0 22 19" fill="none" stroke="#16181d" stroke-width="1.900" stroke-linecap="round" stroke-linejoin="round"><path d="M6.200 16.400H16C18.400 16.400 20.100 14.800 20.100 12.700C20.100 10.900 18.900 9.500 17.200 9.100C17 5.500 14.500 2.700 11.200 2.700C8 2.700 5.400 5.500 5.300 9.100C3.500 9.500 2.300 10.900 2.300 12.700C2.300 14.800 3.900 16.400 6.200 16.400Z"/><path d="M8.600 10.900L10.700 13L14.200 9.500" stroke-width="1.700"/></svg>
  <div class="abs tt" style="left:61.800px;top:17px;font-size:14.600px;line-height:20px;letter-spacing:.42px">Untitled image</div>
  <svg class="abs" style="left:175px;top:22.500px" width="12" height="9" viewBox="0 0 12 9" fill="none" stroke="#16181d" stroke-width="1.700" stroke-linecap="round" stroke-linejoin="round"><path d="M2 2.300L5.900 6.400L9.800 2.300"/></svg>

  <div class="abs" style="left:647.800px;top:10.400px;width:33.200px;height:33.200px;border-radius:9px;background:#e9edf0"></div>
  <svg class="abs" style="left:656px;top:17px" width="18" height="20" viewBox="0 0 18 20" fill="none" stroke="#16181d" stroke-width="1.900" stroke-linejoin="round"><path d="M3.900 2.700L15.600 11.300L8.600 13.600L4.900 18.600Z"/></svg>
  <svg class="abs" style="left:692px;top:16px" width="20" height="22" viewBox="0 0 20 22" fill="none" stroke="#16181d" stroke-width="1.500" stroke-linecap="round" stroke-linejoin="round"><path d="M7.600 11V4.800C7.600 3.200 9.800 3.200 9.800 4.800V3.600C9.800 2 12 2 12 3.600V4.400C12 2.900 14.200 2.900 14.200 4.400V6.400C14.200 5 16.400 5 16.400 6.400V13.600C16.400 17.600 14 20 11.200 20C8.600 20 7 18.800 5.600 16.600L2.800 12.200C2 10.800 3.800 9.800 4.800 11L7.600 14"/><path d="M9.800 4.800V10.400M12 4.400V10.400M14.200 6.400V10.600"/></svg>
  <svg class="abs" style="left:733px;top:18px" width="18" height="18" viewBox="0 0 18 18" fill="none" stroke="#16181d" stroke-width="1.900" stroke-linejoin="round"><rect x="2" y="2.300" width="13.600" height="13.400" rx="2"/><path d="M2 6.800H15.600M11.200 6.800V15.700"/></svg>
  <svg class="abs" style="left:756.800px;top:22.500px" width="12" height="9" viewBox="0 0 12 9" fill="none" stroke="#16181d" stroke-width="1.700" stroke-linecap="round" stroke-linejoin="round"><path d="M2 2.300L5.900 6.400L9.800 2.300"/></svg>
  <div class="abs tt" style="left:789.600px;top:17px;font-size:14.600px;line-height:20px">32%</div>
  <svg class="abs" style="left:836px;top:22.500px" width="12" height="9" viewBox="0 0 12 9" fill="none" stroke="#16181d" stroke-width="1.700" stroke-linecap="round" stroke-linejoin="round"><path d="M2 2.300L5.900 6.400L9.800 2.300"/></svg>
  <div class="abs" style="left:864.200px;top:19px;width:1.500px;height:16px;background:#e3e8ee"></div>
  <svg class="abs" style="left:878px;top:18px" width="17" height="18" viewBox="0 0 17 18" fill="none" stroke="#16181d" stroke-width="1.800" stroke-linecap="round" stroke-linejoin="round"><path d="M6.400 2.400L2.200 6.200L6.400 10M2.600 6.200H10C13 6.200 14.600 8.200 14.600 10.600C14.600 13 13 15 10 15H4.400"/></svg>
  <svg class="abs" style="left:916px;top:18px" width="17" height="18" viewBox="0 0 17 18" fill="none" stroke="#cdd5e0" stroke-width="1.800" stroke-linecap="round" stroke-linejoin="round"><path d="M10.600 2.400L14.800 6.200L10.600 10M14.400 6.200H7C4 6.200 2.400 8.200 2.400 10.600C2.400 13 4 15 7 15H12.600"/></svg>

  <div class="abs" style="left:1404.400px;top:10.300px;width:125.600px;height:33.200px;border-radius:9px;background:linear-gradient(90deg,#3da3f0 0%,#19b6e4 40%,#00c7dc 75%,#00c9dc 100%);box-shadow:0 2px 6px rgba(30,160,220,.18)"></div>
  <svg class="abs" style="left:1414.500px;top:20.600px" width="14" height="14" viewBox="0 0 14 14" fill="none" stroke="#fff" stroke-width="1.400" stroke-linecap="round" stroke-linejoin="round"><path d="M4.200 6H3.400C2.400 6 1.800 6.600 1.800 7.600V11C1.800 12 2.400 12.600 3.400 12.600H10.600C11.600 12.600 12.200 12 12.200 11V7.600C12.200 6.600 11.600 6 10.600 6H9.800"/><path d="M7 9V1.800M4.600 4L7 1.600L9.400 4"/></svg>
  <div class="abs" style="left:1434.600px;top:17.300px;font-size:13.800px;line-height:20px;font-weight:bold;color:#fff;letter-spacing:-.05px">Download all</div>
  <svg class="abs" style="left:1544.500px;top:15.800px" width="20" height="21" viewBox="0 0 20 21" fill="none" stroke="#16181d" stroke-width="1.800" stroke-linecap="round" stroke-linejoin="round"><path d="M10 2.200L16.800 4.800V10C16.800 14.200 14 17.200 10 18.800C6 17.200 3.200 14.200 3.200 10V4.800Z"/><path d="M7.200 10.400L9.200 12.400L13 8.600" stroke-width="1.700"/></svg>
</div>
<div id="hruler"><svg class="abs" style="left:0;top:0" width="1587" height="24"><path d="M560.30 17.4V23.8M567.06 21.8V23.8M573.81 21.8V23.8M580.57 21.8V23.8M587.32 21.8V23.8M594.08 19.4V23.8M600.84 21.8V23.8M607.59 21.8V23.8M614.35 21.8V23.8M621.10 21.8V23.8M627.86 17.4V23.8M634.62 21.8V23.8M641.37 21.8V23.8M648.13 21.8V23.8M654.88 21.8V23.8M661.64 19.4V23.8M668.40 21.8V23.8M675.15 21.8V23.8M681.91 21.8V23.8M688.66 21.8V23.8M695.42 17.4V23.8M702.18 21.8V23.8M708.93 21.8V23.8M715.69 21.8V23.8M722.44 21.8V23.8M729.20 19.4V23.8M735.96 21.8V23.8M742.71 21.8V23.8M749.47 21.8V23.8M756.22 21.8V23.8M762.98 17.4V23.8M769.74 21.8V23.8M776.49 21.8V23.8M783.25 21.8V23.8M790.00 21.8V23.8M796.76 19.4V23.8M803.52 21.8V23.8M810.27 21.8V23.8M817.03 21.8V23.8M823.78 21.8V23.8M830.54 17.4V23.8M837.30 21.8V23.8M844.05 21.8V23.8M850.81 21.8V23.8M857.56 21.8V23.8M864.32 19.4V23.8M871.08 21.8V23.8M877.83 21.8V23.8M884.59 21.8V23.8M891.34 21.8V23.8M898.10 17.4V23.8M904.86 21.8V23.8M911.61 21.8V23.8M918.37 21.8V23.8M925.12 21.8V23.8M931.88 19.4V23.8M938.64 21.8V23.8M945.39 21.8V23.8M952.15 21.8V23.8M958.90 21.8V23.8M965.66 17.4V23.8" stroke="#a9b1c0" stroke-width="1" fill="none"/><g font-size="10.2" fill="#a3abba" font-family="Liberation Sans, sans-serif"><text x="560.3" y="13.8" text-anchor="middle">0</text><text x="627.9" y="13.8" text-anchor="middle">200</text><text x="695.4" y="13.8" text-anchor="middle">400</text><text x="763.0" y="13.8" text-anchor="middle">600</text><text x="830.5" y="13.8" text-anchor="middle">800</text><text x="898.1" y="13.8" text-anchor="middle">1000</text><text x="965.7" y="13.8" text-anchor="middle">1200</text></g></svg></div>
<div id="vruler"><svg class="abs" style="left:.5px;top:0" width="24" height="732"><path d="M17.0 41.30H23.4M21.4 48.06H23.4M21.4 54.81H23.4M21.4 61.57H23.4M21.4 68.32H23.4M19.0 75.08H23.4M21.4 81.84H23.4M21.4 88.59H23.4M21.4 95.35H23.4M21.4 102.10H23.4M17.0 108.86H23.4M21.4 115.62H23.4M21.4 122.37H23.4M21.4 129.13H23.4M21.4 135.88H23.4M19.0 142.64H23.4M21.4 149.40H23.4M21.4 156.15H23.4M21.4 162.91H23.4M21.4 169.66H23.4M17.0 176.42H23.4M21.4 183.18H23.4M21.4 189.93H23.4M21.4 196.69H23.4M21.4 203.44H23.4M19.0 210.20H23.4M21.4 216.96H23.4M21.4 223.71H23.4M21.4 230.47H23.4M21.4 237.22H23.4M17.0 243.98H23.4M21.4 250.74H23.4M21.4 257.49H23.4M21.4 264.25H23.4M21.4 271.00H23.4M19.0 277.76H23.4M21.4 284.52H23.4M21.4 291.27H23.4M21.4 298.03H23.4M21.4 304.78H23.4M17.0 311.54H23.4M21.4 318.30H23.4M21.4 325.05H23.4M21.4 331.81H23.4M21.4 338.56H23.4M19.0 345.32H23.4M21.4 352.08H23.4M21.4 358.83H23.4M21.4 365.59H23.4M21.4 372.34H23.4M17.0 379.10H23.4M21.4 385.86H23.4M21.4 392.61H23.4M21.4 399.37H23.4M21.4 406.12H23.4M19.0 412.88H23.4M21.4 419.64H23.4M21.4 426.39H23.4M21.4 433.15H23.4M21.4 439.90H23.4M17.0 446.66H23.4M21.4 453.42H23.4M21.4 460.17H23.4M21.4 466.93H23.4M21.4 473.68H23.4M19.0 480.44H23.4M21.4 487.20H23.4M21.4 493.95H23.4M21.4 500.71H23.4M21.4 507.46H23.4M17.0 514.22H23.4M21.4 520.98H23.4M21.4 527.73H23.4M21.4 534.49H23.4M21.4 541.24H23.4M19.0 548.00H23.4M21.4 554.76H23.4M21.4 561.51H23.4M21.4 568.27H23.4M21.4 575.02H23.4M17.0 581.78H23.4M21.4 588.54H23.4M21.4 595.29H23.4M21.4 602.05H23.4M21.4 608.80H23.4M19.0 615.56H23.4M21.4 622.32H23.4M21.4 629.07H23.4M21.4 635.83H23.4M21.4 642.58H23.4M17.0 649.34H23.4M21.4 656.10H23.4M21.4 662.85H23.4M21.4 669.61H23.4M21.4 676.36H23.4M19.0 683.12H23.4M21.4 689.88H23.4M21.4 696.63H23.4M21.4 703.39H23.4M21.4 710.14H23.4M17.0 716.90H23.4M21.4 723.66H23.4M21.4 730.41H23.4" stroke="#a9b1c0" stroke-width="1" fill="none"/><g font-size="10.2" fill="#a3abba" font-family="Liberation Sans, sans-serif"><text transform="translate(13.4 41.3) rotate(-90)" text-anchor="middle">0</text><text transform="translate(13.4 108.9) rotate(-90)" text-anchor="middle">200</text><text transform="translate(13.4 176.4) rotate(-90)" text-anchor="middle">400</text><text transform="translate(13.4 244.0) rotate(-90)" text-anchor="middle">600</text><text transform="translate(13.4 311.5) rotate(-90)" text-anchor="middle">800</text><text transform="translate(13.4 379.1) rotate(-90)" text-anchor="middle">1000</text><text transform="translate(13.4 446.7) rotate(-90)" text-anchor="middle">1200</text><text transform="translate(13.4 514.2) rotate(-90)" text-anchor="middle">1400</text><text transform="translate(13.4 581.8) rotate(-90)" text-anchor="middle">1600</text><text transform="translate(13.4 649.3) rotate(-90)" text-anchor="middle">1800</text><text transform="translate(13.4 716.9) rotate(-90)" text-anchor="middle">2000</text></g></svg></div>
<div id="canvas"></div>
<div class="abs" style="left:976.600px;top:95.800px;font-size:12.200px;line-height:15px;color:#a9b2c0">Page 1</div>
<svg class="abs" style="left:1293.500px;top:95px" width="15" height="15" viewBox="0 0 15 15" fill="none" stroke="#8e97a6" stroke-width="1.200" stroke-linejoin="round" stroke-linecap="round"><rect x="1.400" y="4" width="9.600" height="9.600" rx="2"/><path d="M4.200 3.800V3.200C4.200 2 5 1.400 6 1.400H11.600C12.800 1.400 13.600 2.200 13.600 3.400V9C13.600 10 13 10.800 11.800 10.800H11.200"/><path d="M2 11.600L5 8.600L8.400 12.600" /><circle cx="7.800" cy="7" r=".8" fill="#8e97a6" stroke="none"/></svg>
<svg class="abs" style="left:1324px;top:100px" width="14" height="4" viewBox="0 0 14 4" fill="#6f7886"><circle cx="2" cy="2" r="1.300"/><circle cx="7" cy="2" r="1.300"/><circle cx="12" cy="2" r="1.300"/></svg>
<div id="artboard">
  <!-- coordinates inside page: abs - (976.2,121.3) -->
  <div class="hl" id="h1" style="left:35.600px;top:48.400px">NEW FASHION</div>
  <div class="hl" id="h2" style="left:35.200px;top:475.300px">NEW FASHION</div>

  <!-- photo 1 -->
  <svg class="abs" style="left:36.500px;top:169px" width="140.200" height="210.600" viewBox="0 0 140 210.500" preserveAspectRatio="none">
    <defs><filter id="b1" x="-5%" y="-5%" width="110%" height="110%"><feGaussianBlur stdDeviation="1.300"/></filter>
    <linearGradient id="sky1" x1="0" y1="0" x2="0" y2="1"><stop offset="0" stop-color="#c4dbe6"/><stop offset=".55" stop-color="#dfe6e0"/><stop offset=".8" stop-color="#c9c09c"/><stop offset="1" stop-color="#6e6a55"/></linearGradient>
    <clipPath id="cp1"><rect width="140" height="210.500"/></clipPath></defs>
    <g id="ph1" clip-path="url(#cp1)"><g filter="url(#b1)">
      <rect x="-5" y="-5" width="150" height="221" fill="#1d1e20"/>
      <rect x="-5" y="-5" width="60" height="105" fill="url(#sky1)"/>
      <path d="M-5 60C6 48 22 52 30 66L32 98H-5Z" fill="#8b8457" opacity=".75"/>
      <path d="M-5 10C2 8 6 18 3 30L-5 32Z" fill="#4a4f3a"/>
      <rect x="-5" y="96" width="50" height="120" fill="#17181a"/>
      <rect x="0" y="118" width="3" height="90" fill="#3a3c40"/><rect x="10" y="118" width="2" height="90" fill="#2c2e31"/>
      <!-- right wall -->
      <path d="M52 -5H145V216H96Z" fill="#202224"/>
      <path d="M114 -5H145V102L86 96L92 60Z" fill="#43474a"/>
      <path d="M126 -5H145V100L120 98Z" fill="#5d6265"/>
      <path d="M52 -5H114L96 56L80 70Z" fill="#141618"/>
      <path d="M100 -5H110L98 54L92 52Z" fill="#33373a"/>
      <path d="M96 100L145 104V216H100Z" fill="#232528"/>
      <!-- hair -->
      <path d="M30 60C28 32 44 14 64 17C80 18 90 30 88 44L74 40C60 38 46 46 44 62L46 92L32 96Z" fill="#2a1c17"/>
      <!-- face/neck -->
      <path d="M48 46C52 32 66 28 78 34C86 40 88 52 86 62C84 72 78 80 70 80L62 78C52 72 46 60 48 46Z" fill="#e3b596"/>
      <path d="M42 56C44 52 48 54 48 60C48 66 44 68 42 62Z" fill="#d9a585"/>
      <path d="M48 46C50 38 56 32 62 31L58 50L60 70L64 78C54 74 46 60 48 46Z" fill="#cf9c7e"/>
      <path d="M56 78L74 82L72 100L60 140L52 104Z" fill="#dba888"/>
      <path d="M70 40L86 44L84 50L72 48Z" fill="#c9a78c"/>
      <rect x="50" y="43.500" width="20" height="12" rx="2.500" fill="#8d98a2" transform="rotate(6 60 49)"/>
      <rect x="76" y="45" width="15" height="11" rx="2.500" fill="#a9a7a4" transform="rotate(6 83 50)"/>
      <path d="M46 47L51 47.500" stroke="#d8b296" stroke-width="2"/>
      <path d="M70 64C74 62 79 63 80 66C78 70 72 69 70 64Z" fill="#c44a3c"/>
      <!-- jacket -->
      <path d="M8 120C10 102 30 94 50 90L58 104L56 140L66 176L22 190L10 168Z" fill="#eeeeea"/>
      <path d="M76 88C90 92 112 100 120 112C126 134 124 160 118 176L60 190L56 150L70 120Z" fill="#f3f3f0"/>
      <path d="M76 88L96 100L92 130L74 150L64 134L72 104Z" fill="#fbfbf9"/>
      <path d="M50 90L58 104L54 132L44 108Z" fill="#dcdcd6"/>
      <path d="M104 104C114 112 118 130 114 168L100 172C106 148 106 124 98 108Z" fill="#cfcfca"/>
      <path d="M14 150L30 146L34 176L22 186Z" fill="#d9d9d4"/>
      <path d="M52 98L62 88L77 85L81 102L67 140L58 140Z" fill="#d19f80"/>
      <path d="M58 92L70 88L66 120L60 138Z" fill="#e2b494"/>
      <!-- strap -->
      <path d="M91 92L95 94L100 210H95Z" fill="#17181a"/>
      <!-- hands -->
      <path d="M20 150C28 140 42 134 50 138L56 150C54 164 40 176 26 178C18 172 16 160 20 150Z" fill="#dca98a"/>
      <path d="M56 140C62 132 72 136 76 144C78 158 72 172 62 178C54 172 50 156 56 140Z" fill="#d9a282"/>
      <!-- shirt bottom / waist -->
      <path d="M30 178L90 172L92 188L34 194Z" fill="#e9e9e5"/>
      <path d="M40 192L88 188L86 198L46 200Z" fill="#d3a98e"/>
      <!-- jeans -->
      <path d="M16 196C30 192 40 198 60 198C76 198 86 194 90 192L94 216H14Z" fill="#a3bfd0"/>
    </g></g>
  </svg>

  <!-- photo 2 -->
  <svg class="abs" style="left:182.900px;top:169.200px" width="145.700" height="141.100" viewBox="0 0 145.700 141" preserveAspectRatio="none">
    <defs><filter id="b2" x="-5%" y="-5%" width="110%" height="110%"><feGaussianBlur stdDeviation="1.200"/></filter><clipPath id="cp2"><rect width="145.700" height="141"/></clipPath></defs>
    <g id="ph2" clip-path="url(#cp2)"><g filter="url(#b2)">
      <rect x="-5" y="-5" width="156" height="151" fill="#e5e3de"/>
      <rect x="-5" y="77" width="52" height="70" fill="#4a4b50"/>
      <rect x="-5" y="75" width="52" height="5" fill="#63656a"/>
      <!-- right: wall, door & stairs -->
      <rect x="118" y="-5" width="34" height="80" fill="#eceae6"/>
      <path d="M135 -5H151V15Z" fill="#6a5f55"/>
      <rect x="126" y="18" width="11" height="56" fill="#8d8984"/>
      <rect x="131" y="23" width="5" height="51" fill="#b1ada7"/>
      <path d="M100 70H151V146H92Z" fill="#5a5d62"/>
      <path d="M118 70H151V77H116Z" fill="#3f4146"/>
      <path d="M112 84H151V90H110Z" fill="#7a7d82"/><path d="M108 98H151V104H106Z" fill="#74777c"/><path d="M120 128H151V146H118Z" fill="#9a9da0"/>
      <!-- jeans -->
      <path d="M46 77L51 62L69 57L92 63L100 60L104 120L106 146H46L44 104Z" fill="#a9bfd2"/>
      <path d="M70 58L86 62L80 96L74 98Z" fill="#8fabc3"/>
      <path d="M46 80L50 72L54 146H46Z" fill="#8ea9c0"/>
      <path d="M94 120L104 118L106 146H98Z" fill="#b4c8d8"/>
      <!-- torso -->
      <path d="M59 -5L51 16L51 55L69 56L92 63L100 55L107 27L127 13L120 -5Z" fill="#f7f6f3"/>
      <path d="M74 -5H95L84 19Z" fill="#e1b89e"/>
      <path d="M72 -5H80L77 7Z" fill="#4a362c"/>
      <path d="M84 19L97 -3L104 4L90 44L80 40Z" fill="#fdfcfa"/>
      <path d="M62 8L72 20L68 26L60 16Z" fill="#dedcd6"/>
      <path d="M54 52L92 60L91 65L54 57Z" fill="#e6e4df"/>
      <path d="M68 57L92 63L91 66L68 60Z" fill="#d3ab92"/>
      <!-- left sleeve -->
      <path d="M51 16L53 97L58 104L76 100L69 56L62 20Z" fill="#f3f2ee"/>
      <path d="M66 40L69 56L75 98L70 100Z" fill="#dddbd5"/>
      <!-- right sleeve -->
      <path d="M127 13L122 42L111 73L98 120L89 122L76 100L93 64L100 55L107 27Z" fill="#faf9f7"/>
      <path d="M100 55L93 64L78 100L84 108L104 62Z" fill="#e4e2dc"/>
      <!-- straps -->
      <path d="M105 -5L109 -5L99 58L95 60Z" fill="#3a3638"/>
      <path d="M117 36L121 34L136 106L132 107Z" fill="#2b2a2d"/>
      <!-- hands -->
      <path d="M64 104L76 100L89 111L93 126L92 146H66L67 122Z" fill="#e5b69d"/>
      <path d="M72 118L86 146H78L69 126Z" fill="#d39d84"/>
      <path d="M80 108L94 128L92 134L78 114Z" fill="#efc7b0"/>
      <!-- bag -->
      <path d="M98 104L137 107L141 112L136 141L98 131Z" fill="#1b1b1d"/>
      <path d="M104 110L132 113L130 132L104 126Z" fill="#37373a"/>
    </g></g>
  </svg>

  <!-- photo 3 -->
  <svg class="abs" style="left:182.900px;top:317.800px" width="144.700" height="158" viewBox="0 0 144.700 158" preserveAspectRatio="none">
    <defs><filter id="b3" x="-5%" y="-5%" width="110%" height="110%"><feGaussianBlur stdDeviation="1.200"/></filter><clipPath id="cp3"><rect width="144.700" height="158"/></clipPath></defs>
    <g id="ph3" clip-path="url(#cp3)"><g filter="url(#b3)">
      <rect x="-5" y="-5" width="155" height="168" fill="#a8a9a5"/>
      <rect x="-5" y="-5" width="52" height="44" fill="#dddddb"/>
      <rect x="3" y="-5" width="10" height="17" fill="#4a4c50"/>
      <rect x="45" y="-5" width="105" height="40" fill="#3b3b3f"/>
      <path d="M-5 37H47V33H150V66L-5 50Z" fill="#484a50"/>
      <path d="M-5 49L150 64V70L-5 55Z" fill="#b9bab6"/>
      <!-- stairs -->
      <path d="M-5 72L24 86L28 100L38 104L40 118L46 122V163H-5Z" fill="#5e6165"/>
      <path d="M-5 88L26 100V104L-5 92ZM-5 108L36 118V122L-5 112ZM-5 130L44 138V142L-5 134Z" fill="#7c7f83"/>
      <path d="M58 148L100 163H70Z" fill="#84877f"/>
      <!-- hair -->
      <path d="M66 22C70 10 84 8 92 16C98 26 98 42 96 52L88 56L80 50L70 58L56 70L64 52L78 40Z" fill="#1b1718"/>
      <!-- face -->
      <path d="M62 22C66 16 76 18 78 26L80 40C76 44 70 46 64 44L60 40L61 36L58 32L62 28Z" fill="#dfb096"/>
      <path d="M60 23L76 26L75 30L61 28Z" fill="#8f8a84"/>
      <path d="M58 34L62 34L61 37Z" fill="#c5483c"/>
      <path d="M70 44L80 46L78 58L72 56Z" fill="#d9a98f"/>
      <!-- jacket -->
      <path d="M56 66C64 54 78 50 92 52C108 54 118 62 120 72L126 100L122 116L106 132L92 124L96 108L70 112L62 96L54 132L44 128C46 104 50 82 56 66Z" fill="#f6f6f4"/>
      <path d="M72 58L84 60L78 84L92 100L74 104L66 86Z" fill="#ecece8"/>
      <path d="M74 60L80 62L74 78L70 72Z" fill="#dcae94"/>
      <path d="M44 128L54 132L58 110L62 96L56 84C50 98 46 112 44 128Z" fill="#fbfbfa"/>
      <path d="M100 60C112 64 118 70 120 78L124 100L112 106L104 84Z" fill="#fdfdfc"/>
      <!-- strap / bag -->
      <path d="M88 52L92 51L100 98L97 99Z" fill="#1d1c1f"/>
      <path d="M106 116L109 114L116 128L113 130Z" fill="#2a292c"/>
      <path d="M110 126L124 122L126 152L114 158L108 150Z" fill="#19191b"/>
      <!-- waist skin -->
      <path d="M70 110L96 108L94 116L74 118Z" fill="#d6ab93"/>
      <!-- jeans -->
      <path d="M70 114C82 112 96 114 104 120L114 140L112 163H88L82 140L60 150L54 163H32C36 146 44 138 56 132L70 124Z" fill="#b6cbdc"/>
      <path d="M38 138L46 134L52 142L44 150Z" fill="#dcae94"/>
      <path d="M82 118L92 124L88 132L80 126Z" fill="#dcae94"/>
      <path d="M96 124L110 134L112 163H100Z" fill="#9fb8cc"/>
    </g></g>
  </svg>

  <div class="abs" style="left:36.600px;top:554.600px;width:140.300px;height:56.800px;background:#3b362f"></div>
  <div class="abs" style="left:188.400px;top:554.600px;width:140.300px;height:56.800px;background:#3b362f"></div>
  <div class="sn" style="left:46.8px;top:561.0px">SHOP NOW</div>
  <div class="abs" style="left:188.400px;top:568px;width:140.300px;text-align:center;color:#fff;font-size:16px;line-height:17px;letter-spacing:-.55px;word-spacing:.8px;white-space:nowrap;-webkit-text-stroke:.3px #fff;transform:scaleX(.925)">GET 30% OFF AT</div>
  <div class="abs" style="left:188.400px;top:585.600px;width:140.300px;text-align:center;color:#fff;font-size:13.100px;line-height:15px;letter-spacing:-.45px;white-space:nowrap;-webkit-text-stroke:.3px #fff;transform:scaleX(.95)">WWW.CAPCUT.COM</div>
  <div class="card" id="c2" style="left:174.200px;top:303px;width:148.600px;height:263.300px;background:#050505">
  <svg width="149" height="264" viewBox="0 0 149 264" font-family="Liberation Serif, serif">
    <rect width="149" height="264" fill="#050505"/>
    <!-- back frame -->
    <rect x="106" y="52" width="30" height="159" fill="#e9e9e9"/>
    <rect x="106" y="59" width="24" height="146" fill="#111"/>
    <path d="M106 100C118 110 128 130 130 160V205H106Z" fill="#bdbdbd"/>
    <path d="M106 92C114 96 122 104 126 116L130 140V100C124 84 114 76 106 76Z" fill="#1a1a1a"/>
    <path d="M112 186L130 166V172L116 190Z" fill="#1a1a1a"/>
    <!-- front paper -->
    <rect x="14.200" y="45.800" width="96.200" height="171.400" fill="#d0d0cb"/>
    <clipPath id="c2p"><rect x="23.700" y="60.200" width="77.300" height="76.800" rx="8"/></clipPath>
    <g clip-path="url(#c2p)">
      <rect x="23" y="60" width="79" height="78" fill="#101010"/>
      <path d="M23 60h50C60 64 46 70 38 82L23 88Z" fill="#1c1c1c"/>
      <path d="M24 88C32 76 48 66 66 62C60 72 52 80 46 92L36 108L24 112Z" fill="#9c9c9c"/>
      <path d="M50 70C58 60 76 58 86 68C92 76 92 88 86 96L62 92Z" fill="#181818"/>
      <path d="M52 82C54 74 62 70 70 72C78 76 80 88 78 98C76 108 70 114 62 112C54 110 50 94 52 82Z" fill="#bdbdbd"/>
      <path d="M70 72C76 70 82 76 82 84L80 96L76 84Z" fill="#2a2a2a"/>
      <path d="M23 112C36 104 52 108 60 116C70 122 86 118 101 126V138H23Z" fill="#a8a8a8"/>
      <path d="M60 114L74 120L78 138H56Z" fill="#cfcfcf"/>
      <path d="M80 138L101 110V116L86 138Z" fill="#151515"/>
    </g>
    <text x="62.400" y="151.400" font-size="3.600" font-style="italic" fill="#333" text-anchor="middle">Hypic</text>
    <text x="62.400" y="165.400" font-size="10.800" font-weight="bold" fill="#222" text-anchor="middle" letter-spacing="-.2">Black Friday</text>
    <text x="62.400" y="171.800" font-size="4.600" fill="#1c1c1c" text-anchor="middle" font-weight="bold">UP TO 45% OFF</text>
    <g font-size="2.500" fill="#333" text-anchor="middle"><text x="62.400" y="178.600">RELEVANT TO ANY SEASONAL</text><text x="62.400" y="181.600">BEST SEARCH</text><text x="62.400" y="184.600">OFFER BIG CLASSES</text></g>
    <path d="M62.400 192.500v6M60.200 196.500l2.200-2.500 2.200 2.500" stroke="#444" stroke-width=".5" fill="none"/>
    <text x="62.400" y="211.600" font-size="2.200" fill="#333" text-anchor="middle">WWW.HYPIC.COM</text>
  </svg></div>
  <div class="card" id="c3" style="left:16.800px;top:574.400px;width:149px;height:262.800px;background:#fffef8">
  <svg width="149" height="263" viewBox="0 0 149 263" font-family="Liberation Sans, sans-serif">
    <rect width="149" height="263" fill="#fffef8"/>
    <path d="M0 41C14 36 26 52 40 58C52 62 62 50 70 48M110 70C124 70 126 84 120 96C110 112 86 110 84 98C82 88 96 84 98 94C100 104 88 112 70 112C52 112 40 104 32 110C26 116 30 130 40 140C56 154 90 150 106 164C118 174 120 184 114 192M8 186C6 172 18 162 34 164C56 166 70 178 66 192C62 206 46 216 40 222C52 240 74 240 92 234C100 230 104 226 108 222M40 222C30 230 12 230 8 216C6 206 6 196 8 186" fill="none" stroke="#c23a35" stroke-width="1.050"/>
    <text x="16" y="28" font-size="20" font-weight="bold" fill="#4c9d74" font-family="Liberation Serif, serif">“</text>
    <text x="38.600" y="25" font-size="5.600" fill="#c2302c" stroke="#c2302c" stroke-width=".15">01. <tspan text-decoration="underline">Sweater</tspan></text>
    <!-- sweater -->
    <path d="M86 18C92 12 110 10 120 16C132 20 140 32 143 60L134 66L128 46L126 72C112 78 96 76 86 70L86 46L78 64L69 58C72 40 76 26 86 18Z" fill="#efe7d4"/>
    <path d="M96 14C100 20 110 20 116 14" fill="none" stroke="#d9cfb8" stroke-width="1.500"/>
    <path d="M92 30L98 70M104 24L106 74M114 26L116 72M86 48L126 50" stroke="#e2d8c0" stroke-width="1.200" fill="none"/>
    <circle cx="129.300" cy="18.100" r="4.600" fill="#b8161b"/>
    <!-- scarf -->
    <path d="M28 84C36 74 52 74 60 84L64 100C70 108 74 118 78 128L62 136L56 118L46 124L40 112L30 104Z" fill="#b9232d"/>
    <path d="M34 82L44 118M48 78L60 130M30 96L64 100M38 108L72 118" stroke="#1e2a55" stroke-width="2.400" fill="none" opacity=".85"/>
    <path d="M40 80L52 122M54 82L68 126" stroke="#e8e0d0" stroke-width=".5" fill="none" opacity=".8"/>
    <path d="M44 124l-2 12M50 126l-1 11M56 126l1 11M62 132l2 8M68 128l3 8M74 126l3 6" stroke="#8f1a22" stroke-width="1" fill="none"/>
    <circle cx="25.600" cy="99.200" r="5" fill="#5aa981"/>
    <text x="91.700" y="126.400" font-size="10.400" font-style="italic" fill="#4fa078" letter-spacing="-.35" stroke="#4fa078" stroke-width=".25">@HYPIC</text>
    <text x="18" y="145.400" font-size="5.400" fill="#c2302c" stroke="#c2302c" stroke-width=".15">02. <tspan text-decoration="underline">Scarf</tspan></text>
    <g font-size="8.200" fill="#c2302c" stroke="#c2302c" stroke-width=".3"><text x="11.300" y="184.200">My 2023</text><text x="11.300" y="195.100">Christmas</text><text x="11.300" y="206">Wishlist</text></g>
    <!-- boot -->
    <path d="M96 181C104 178 118 178 126 182L128 200C130 206 131 210 128 213L78 212C74 210 74 204 78 200C86 198 94 192 96 181Z" fill="#b36c3c"/>
    <path d="M76 208H130V213C112 215 92 215 76 213Z" fill="#d8b88c"/>
    <path d="M96 181C104 178 118 178 126 182L126 186C118 183 104 183 96 186Z" fill="#c98a58"/>
    <circle cx="127.600" cy="182.300" r="4.600" fill="#b8161b"/>
    <text x="107" y="225.600" font-size="5.400" fill="#c2302c" stroke="#c2302c" stroke-width=".15">03. <tspan text-decoration="underline">Boots</tspan></text>
    <text x="126.500" y="252" font-size="20" font-weight="bold" fill="#4c9d74" font-family="Liberation Serif, serif">”</text>
    <text x="73.500" y="252.800" font-size="5.400" font-weight="bold" fill="#c2302c" text-anchor="middle">www.hypic.com</text>
  </svg></div>
  <div class="card" id="c4" style="left:174.200px;top:574.400px;width:148.600px;height:262.800px;background:#e3e3e3">
  <svg width="149" height="263" viewBox="0 0 149 263" font-family="Liberation Sans, sans-serif">
    <defs><linearGradient id="g4" x1="0" y1="0" x2="1" y2="1"><stop offset="0" stop-color="#e9e9e9"/><stop offset=".5" stop-color="#dcdcdc"/><stop offset="1" stop-color="#e6e6e6"/></linearGradient>
    <linearGradient id="g4y" x1="0" y1="0" x2="0" y2="1"><stop offset="0" stop-color="#fbe9a8"/><stop offset="1" stop-color="#f8d357"/></linearGradient></defs>
    <rect width="149" height="263" fill="url(#g4)"/>
    <g stroke="#f6f6f6" stroke-width="2.500" fill="none" opacity=".9"><path d="M0 60C30 40 60 80 100 30L149 10M20 263C40 220 10 200 40 150M100 263C120 230 140 240 149 200M60 0C70 30 120 40 149 60M0 230C30 240 60 228 80 250"/></g>
    <g stroke="#cfcfcf" stroke-width="1.200" fill="none" opacity=".8"><path d="M0 64C30 44 60 84 100 34L149 14M24 263C44 220 14 200 44 150M64 0C74 30 124 40 149 64"/></g>
    <circle cx="74.300" cy="178.500" r="68.500" fill="url(#g4y)"/>
    <g font-size="17.600" font-weight="bold" fill="none" stroke="#fdfdfd" stroke-width=".8" letter-spacing="-.3"><text x="5" y="22.600">CHOOSE</text><text x="5" y="40.400">NEW</text><text x="5" y="58.500">IPHONE</text></g>
    <text x="142" y="15.400" font-size="6.400" font-weight="bold" fill="#111" text-anchor="end" letter-spacing="-.2">✕ CapCut</text>
    <g font-size="18.400" font-weight="bold" fill="#0b0b0b" letter-spacing="-.2"><text x="66.400" y="40.400">THE</text><text x="66.400" y="59.500">FUTURE</text><text x="66.400" y="78.700">IS HERE</text></g>
    <path d="M7.200 70.500L15 78.300M8.400 79H15.800V71.600" stroke="#111" stroke-width="1.800" fill="none"/>
    <rect x="141.600" y="90" width=".6" height="53" fill="#444"/><rect x="5" y="167" width=".6" height="53" fill="#444"/>
    <!-- curved text -->
    <path id="arc4" d="M121 196A52 52 0 0 0 127 134" fill="none"/>
    <text font-size="9.500" fill="#222"><textPath href="#arc4">hone 14 Pro</textPath></text>
    <!-- phone back -->
    <rect x="18.800" y="88" width="46" height="137" rx="9" fill="#a9a9a9"/>
    <rect x="19.800" y="89" width="44" height="135" rx="8" fill="#b9b9b9"/>
    <rect x="22" y="92" width="27" height="29" rx="7" fill="#9a9a9a"/>
    <circle cx="30" cy="99.500" r="5" fill="#1c1c1c"/><circle cx="42" cy="106" r="5" fill="#1c1c1c"/><circle cx="30" cy="113" r="5" fill="#1c1c1c"/><circle cx="44.500" cy="97" r="2.400" fill="#f2efe2"/>
    <!-- phone front -->
    <rect x="58" y="88" width="67" height="137.500" rx="11" fill="#0c0c0c"/>
    <rect x="60.400" y="90.400" width="62.200" height="132.700" rx="9" fill="#e7e7e7"/>
    <rect x="82" y="92.700" width="19" height="4.200" rx="2.100" fill="#0c0c0c"/>
    <g text-anchor="middle" font-weight="bold" fill="#111"><text x="91.400" y="141.500" font-size="5.400">New</text><text x="91.400" y="149.600" font-size="5.400">iPhone 14 Pro</text><text x="91.600" y="165" font-size="10.400">From</text><text x="91.600" y="179" font-size="10.400">S$1,649</text></g>
    <text transform="translate(10 228) rotate(38)" font-size="3.600" fill="#8a8a8a">The Future is Here</text>
    <g font-size="2.900" fill="#222"><circle cx="8" cy="256" r="1.600" fill="#111"/><text x="12" y="257">+123-456-7890</text><circle cx="48" cy="256" r="2" fill="#111"/><text x="52.500" y="257">www.capcut.com</text><circle cx="90.500" cy="255.500" r="1.700" fill="#111"/><text x="95" y="257">123 Anywhere St., Any City</text></g>
  </svg></div>
  <div class="card" id="c5" style="left:16.800px;top:845.500px;width:149px;height:20px;background:#fbf4ee">
    <svg width="149" height="10" viewBox="0 0 149 10"><path d="M0 0h18C14 4 8 7 0 8Z" fill="#b8443e"/><path d="M34 0h22C54 4 50 7 45 7S36 4 34 0Z" fill="#f0a58c"/></svg>
  </div>
  <div class="card" id="c6" style="left:174.200px;top:845.500px;width:148.600px;height:20px;background:#060606"></div>
</div>

<!-- ================= MAIN ================= -->
<div id="topbar">
  <svg class="abs" style="left:22.500px;top:17.500px" width="22" height="19" viewBox="0 0 22 19" fill="none" stroke="#16181d" stroke-width="1.900" stroke-linecap="round" stroke-linejoin="round"><path d="M6.200 16.400H16C18.400 16.400 20.100 14.800 20.100 12.700C20.100 10.900 18.900 9.500 17.200 9.100C17 5.500 14.500 2.700 11.200 2.700C8 2.700 5.400 5.500 5.300 9.100C3.500 9.500 2.300 10.900 2.300 12.700C2.300 14.800 3.900 16.400 6.200 16.400Z"/><path d="M8.600 10.900L10.700 13L14.200 9.500" stroke-width="1.700"/></svg>
  <div class="abs tt" style="left:61.800px;top:17px;font-size:14.600px;line-height:20px;letter-spacing:.42px">Untitled image</div>
  <svg class="abs" style="left:175px;top:22.500px" width="12" height="9" viewBox="0 0 12 9" fill="none" stroke="#16181d" stroke-width="1.700" stroke-linecap="round" stroke-linejoin="round"><path d="M2 2.300L5.900 6.400L9.800 2.300"/></svg>

  <div class="abs" style="left:647.800px;top:10.400px;width:33.200px;height:33.200px;border-radius:9px;background:#e9edf0"></div>
  <svg class="abs" style="left:656px;top:17px" width="18" height="20" viewBox="0 0 18 20" fill="none" stroke="#16181d" stroke-width="1.900" stroke-linejoin="round"><path d="M3.900 2.700L15.600 11.300L8.600 13.600L4.900 18.600Z"/></svg>
  <svg class="abs" style="left:692px;top:16px" width="20" height="22" viewBox="0 0 20 22" fill="none" stroke="#16181d" stroke-width="1.500" stroke-linecap="round" stroke-linejoin="round"><path d="M7.600 11V4.800C7.600 3.200 9.800 3.200 9.800 4.800V3.600C9.800 2 12 2 12 3.600V4.400C12 2.900 14.200 2.900 14.200 4.400V6.400C14.200 5 16.400 5 16.400 6.400V13.600C16.400 17.600 14 20 11.200 20C8.600 20 7 18.800 5.600 16.600L2.800 12.200C2 10.800 3.800 9.800 4.800 11L7.600 14"/><path d="M9.800 4.800V10.400M12 4.400V10.400M14.200 6.400V10.600"/></svg>
  <svg class="abs" style="left:733px;top:18px" width="18" height="18" viewBox="0 0 18 18" fill="none" stroke="#16181d" stroke-width="1.900" stroke-linejoin="round"><rect x="2" y="2.300" width="13.600" height="13.400" rx="2"/><path d="M2 6.800H15.600M11.200 6.800V15.700"/></svg>
  <svg class="abs" style="left:756.800px;top:22.500px" width="12" height="9" viewBox="0 0 12 9" fill="none" stroke="#16181d" stroke-width="1.700" stroke-linecap="round" stroke-linejoin="round"><path d="M2 2.300L5.900 6.400L9.800 2.300"/></svg>
  <div class="abs tt" style="left:789.600px;top:17px;font-size:14.600px;line-height:20px">32%</div>
  <svg class="abs" style="left:836px;top:22.500px" width="12" height="9" viewBox="0 0 12 9" fill="none" stroke="#16181d" stroke-width="1.700" stroke-linecap="round" stroke-linejoin="round"><path d="M2 2.300L5.900 6.400L9.800 2.300"/></svg>
  <div class="abs" style="left:864.200px;top:19px;width:1.500px;height:16px;background:#e3e8ee"></div>
  <svg class="abs" style="left:878px;top:18px" width="17" height="18" viewBox="0 0 17 18" fill="none" stroke="#16181d" stroke-width="1.800" stroke-linecap="round" stroke-linejoin="round"><path d="M6.400 2.400L2.200 6.200L6.400 10M2.600 6.200H10C13 6.200 14.600 8.200 14.600 10.600C14.600 13 13 15 10 15H4.400"/></svg>
  <svg class="abs" style="left:916px;top:18px" width="17" height="18" viewBox="0 0 17 18" fill="none" stroke="#cdd5e0" stroke-width="1.800" stroke-linecap="round" stroke-linejoin="round"><path d="M10.600 2.400L14.800 6.200L10.600 10M14.400 6.200H7C4 6.200 2.400 8.200 2.400 10.600C2.400 13 4 15 7 15H12.600"/></svg>

  <div class="abs" style="left:1404.400px;top:10.300px;width:125.600px;height:33.200px;border-radius:9px;background:linear-gradient(90deg,#3da3f0 0%,#19b6e4 40%,#00c7dc 75%,#00c9dc 100%);box-shadow:0 2px 6px rgba(30,160,220,.18)"></div>
  <svg class="abs" style="left:1414.500px;top:20.600px" width="14" height="14" viewBox="0 0 14 14" fill="none" stroke="#fff" stroke-width="1.400" stroke-linecap="round" stroke-linejoin="round"><path d="M4.200 6H3.400C2.400 6 1.800 6.600 1.800 7.600V11C1.800 12 2.400 12.600 3.400 12.600H10.600C11.600 12.600 12.200 12 12.200 11V7.600C12.200 6.600 11.600 6 10.600 6H9.800"/><path d="M7 9V1.800M4.600 4L7 1.600L9.400 4"/></svg>
  <div class="abs" style="left:1434.600px;top:17.300px;font-size:13.800px;line-height:20px;font-weight:bold;color:#fff;letter-spacing:-.05px">Download all</div>
  <svg class="abs" style="left:1544.500px;top:15.800px" width="20" height="21" viewBox="0 0 20 21" fill="none" stroke="#16181d" stroke-width="1.800" stroke-linecap="round" stroke-linejoin="round"><path d="M10 2.200L16.800 4.800V10C16.800 14.200 14 17.200 10 18.800C6 17.200 3.200 14.200 3.200 10V4.800Z"/><path d="M7.200 10.400L9.200 12.400L13 8.600" stroke-width="1.700"/></svg>
</div>
<div id="hruler"><svg class="abs" style="left:0;top:0" width="1587" height="24"><path d="M560.30 17.4V23.8M567.06 21.8V23.8M573.81 21.8V23.8M580.57 21.8V23.8M587.32 21.8V23.8M594.08 19.4V23.8M600.84 21.8V23.8M607.59 21.8V23.8M614.35 21.8V23.8M621.10 21.8V23.8M627.86 17.4V23.8M634.62 21.8V23.8M641.37 21.8V23.8M648.13 21.8V23.8M654.88 21.8V23.8M661.64 19.4V23.8M668.40 21.8V23.8M675.15 21.8V23.8M681.91 21.8V23.8M688.66 21.8V23.8M695.42 17.4V23.8M702.18 21.8V23.8M708.93 21.8V23.8M715.69 21.8V23.8M722.44 21.8V23.8M729.20 19.4V23.8M735.96 21.8V23.8M742.71 21.8V23.8M749.47 21.8V23.8M756.22 21.8V23.8M762.98 17.4V23.8M769.74 21.8V23.8M776.49 21.8V23.8M783.25 21.8V23.8M790.00 21.8V23.8M796.76 19.4V23.8M803.52 21.8V23.8M810.27 21.8V23.8M817.03 21.8V23.8M823.78 21.8V23.8M830.54 17.4V23.8M837.30 21.8V23.8M844.05 21.8V23.8M850.81 21.8V23.8M857.56 21.8V23.8M864.32 19.4V23.8M871.08 21.8V23.8M877.83 21.8V23.8M884.59 21.8V23.8M891.34 21.8V23.8M898.10 17.4V23.8M904.86 21.8V23.8M911.61 21.8V23.8M918.37 21.8V23.8M925.12 21.8V23.8M931.88 19.4V23.8M938.64 21.8V23.8M945.39 21.8V23.8M952.15 21.8V23.8M958.90 21.8V23.8M965.66 17.4V23.8" stroke="#a9b1c0" stroke-width="1" fill="none"/><g font-size="10.2" fill="#a3abba" font-family="Liberation Sans, sans-serif"><text x="560.3" y="13.8" text-anchor="middle">0</text><text x="627.9" y="13.8" text-anchor="middle">200</text><text x="695.4" y="13.8" text-anchor="middle">400</text><text x="763.0" y="13.8" text-anchor="middle">600</text><text x="830.5" y="13.8" text-anchor="middle">800</text><text x="898.1" y="13.8" text-anchor="middle">1000</text><text x="965.7" y="13.8" text-anchor="middle">1200</text></g></svg></div>
<div id="vruler"><svg class="abs" style="left:.5px;top:0" width="24" height="732"><path d="M17.0 41.30H23.4M21.4 48.06H23.4M21.4 54.81H23.4M21.4 61.57H23.4M21.4 68.32H23.4M19.0 75.08H23.4M21.4 81.84H23.4M21.4 88.59H23.4M21.4 95.35H23.4M21.4 102.10H23.4M17.0 108.86H23.4M21.4 115.62H23.4M21.4 122.37H23.4M21.4 129.13H23.4M21.4 135.88H23.4M19.0 142.64H23.4M21.4 149.40H23.4M21.4 156.15H23.4M21.4 162.91H23.4M21.4 169.66H23.4M17.0 176.42H23.4M21.4 183.18H23.4M21.4 189.93H23.4M21.4 196.69H23.4M21.4 203.44H23.4M19.0 210.20H23.4M21.4 216.96H23.4M21.4 223.71H23.4M21.4 230.47H23.4M21.4 237.22H23.4M17.0 243.98H23.4M21.4 250.74H23.4M21.4 257.49H23.4M21.4 264.25H23.4M21.4 271.00H23.4M19.0 277.76H23.4M21.4 284.52H23.4M21.4 291.27H23.4M21.4 298.03H23.4M21.4 304.78H23.4M17.0 311.54H23.4M21.4 318.30H23.4M21.4 325.05H23.4M21.4 331.81H23.4M21.4 338.56H23.4M19.0 345.32H23.4M21.4 352.08H23.4M21.4 358.83H23.4M21.4 365.59H23.4M21.4 372.34H23.4M17.0 379.10H23.4M21.4 385.86H23.4M21.4 392.61H23.4M21.4 399.37H23.4M21.4 406.12H23.4M19.0 412.88H23.4M21.4 419.64H23.4M21.4 426.39H23.4M21.4 433.15H23.4M21.4 439.90H23.4M17.0 446.66H23.4M21.4 453.42H23.4M21.4 460.17H23.4M21.4 466.93H23.4M21.4 473.68H23.4M19.0 480.44H23.4M21.4 487.20H23.4M21.4 493.95H23.4M21.4 500.71H23.4M21.4 507.46H23.4M17.0 514.22H23.4M21.4 520.98H23.4M21.4 527.73H23.4M21.4 534.49H23.4M21.4 541.24H23.4M19.0 548.00H23.4M21.4 554.76H23.4M21.4 561.51H23.4M21.4 568.27H23.4M21.4 575.02H23.4M17.0 581.78H23.4M21.4 588.54H23.4M21.4 595.29H23.4M21.4 602.05H23.4M21.4 608.80H23.4M19.0 615.56H23.4M21.4 622.32H23.4M21.4 629.07H23.4M21.4 635.83H23.4M21.4 642.58H23.4M17.0 649.34H23.4M21.4 656.10H23.4M21.4 662.85H23.4M21.4 669.61H23.4M21.4 676.36H23.4M19.0 683.12H23.4M21.4 689.88H23.4M21.4 696.63H23.4M21.4 703.39H23.4M21.4 710.14H23.4M17.0 716.90H23.4M21.4 723.66H23.4M21.4 730.41H23.4" stroke="#a9b1c0" stroke-width="1" fill="none"/><g font-size="10.2" fill="#a3abba" font-family="Liberation Sans, sans-serif"><text transform="translate(13.4 41.3) rotate(-90)" text-anchor="middle">0</text><text transform="translate(13.4 108.9) rotate(-90)" text-anchor="middle">200</text><text transform="translate(13.4 176.4) rotate(-90)" text-anchor="middle">400</text><text transform="translate(13.4 244.0) rotate(-90)" text-anchor="middle">600</text><text transform="translate(13.4 311.5) rotate(-90)" text-anchor="middle">800</text><text transform="translate(13.4 379.1) rotate(-90)" text-anchor="middle">1000</text><text transform="translate(13.4 446.7) rotate(-90)" text-anchor="middle">1200</text><text transform="translate(13.4 514.2) rotate(-90)" text-anchor="middle">1400</text><text transform="translate(13.4 581.8) rotate(-90)" text-anchor="middle">1600</text><text transform="translate(13.4 649.3) rotate(-90)" text-anchor="middle">1800</text><text transform="translate(13.4 716.9) rotate(-90)" text-anchor="middle">2000</text></g></svg></div>
<div id="canvas"></div>
<div class="abs" style="left:976.600px;top:95.800px;font-size:12.200px;line-height:15px;color:#a9b2c0">Page 1</div>
<svg class="abs" style="left:1293.500px;top:95px" width="15" height="15" viewBox="0 0 15 15" fill="none" stroke="#8e97a6" stroke-width="1.200" stroke-linejoin="round" stroke-linecap="round"><rect x="1.400" y="4" width="9.600" height="9.600" rx="2"/><path d="M4.200 3.800V3.200C4.200 2 5 1.400 6 1.400H11.600C12.800 1.400 13.600 2.200 13.600 3.400V9C13.600 10 13 10.800 11.800 10.800H11.200"/><path d="M2 11.600L5 8.600L8.400 12.600" /><circle cx="7.800" cy="7" r=".8" fill="#8e97a6" stroke="none"/></svg>
<svg class="abs" style="left:1324px;top:100px" width="14" height="4" viewBox="0 0 14 4" fill="#6f7886"><circle cx="2" cy="2" r="1.300"/><circle cx="7" cy="2" r="1.300"/><circle cx="12" cy="2" r="1.300"/></svg>
<div id="artboard">
  <!-- coordinates inside page: abs - (976.2,121.3) -->
  <div class="hl" id="h1" style="left:35.600px;top:48.400px">NEW FASHION</div>
  <div class="hl" id="h2" style="left:35.200px;top:475.300px">NEW FASHION</div>

  <!-- photo 1 -->
  <svg class="abs" style="left:36.500px;top:169px" width="140.200" height="210.600" viewBox="0 0 140 210.500" preserveAspectRatio="none">
    <defs><filter id="b1" x="-5%" y="-5%" width="110%" height="110%"><feGaussianBlur stdDeviation="1.300"/></filter>
    <linearGradient id="sky1" x1="0" y1="0" x2="0" y2="1"><stop offset="0" stop-color="#c4dbe6"/><stop offset=".55" stop-color="#dfe6e0"/><stop offset=".8" stop-color="#c9c09c"/><stop offset="1" stop-color="#6e6a55"/></linearGradient>
    <clipPath id="cp1"><rect width="140" height="210.500"/></clipPath></defs>
    <g id="ph1" clip-path="url(#cp1)"><g filter="url(#b1)">
      <rect x="-5" y="-5" width="150" height="221" fill="#1d1e20"/>
      <rect x="-5" y="-5" width="60" height="105" fill="url(#sky1)"/>
      <path d="M-5 60C6 48 22 52 30 66L32 98H-5Z" fill="#8b8457" opacity=".75"/>
      <path d="M-5 10C2 8 6 18 3 30L-5 32Z" fill="#4a4f3a"/>
      <rect x="-5" y="96" width="50" height="120" fill="#17181a"/>
      <rect x="0" y="118" width="3" height="90" fill="#3a3c40"/><rect x="10" y="118" width="2" height="90" fill="#2c2e31"/>
      <!-- right wall -->
      <path d="M52 -5H145V216H96Z" fill="#202224"/>
      <path d="M114 -5H145V102L86 96L92 60Z" fill="#43474a"/>
      <path d="M126 -5H145V100L120 98Z" fill="#5d6265"/>
      <path d="M52 -5H114L96 56L80 70Z" fill="#141618"/>
      <path d="M100 -5H110L98 54L92 52Z" fill="#33373a"/>
      <path d="M96 100L145 104V216H100Z" fill="#232528"/>
      <!-- hair -->
      <path d="M30 60C28 32 44 14 64 17C80 18 90 30 88 44L74 40C60 38 46 46 44 62L46 92L32 96Z" fill="#2a1c17"/>
      <!-- face/neck -->
      <path d="M48 46C52 32 66 28 78 34C86 40 88 52 86 62C84 72 78 80 70 80L62 78C52 72 46 60 48 46Z" fill="#e3b596"/>
      <path d="M42 56C44 52 48 54 48 60C48 66 44 68 42 62Z" fill="#d9a585"/>
      <path d="M48 46C50 38 56 32 62 31L58 50L60 70L64 78C54 74 46 60 48 46Z" fill="#cf9c7e"/>
      <path d="M56 78L74 82L72 100L60 140L52 104Z" fill="#dba888"/>
      <path d="M70 40L86 44L84 50L72 48Z" fill="#c9a78c"/>
      <rect x="50" y="43.500" width="20" height="12" rx="2.500" fill="#8d98a2" transform="rotate(6 60 49)"/>
      <rect x="76" y="45" width="15" height="11" rx="2.500" fill="#a9a7a4" transform="rotate(6 83 50)"/>
      <path d="M46 47L51 47.500" stroke="#d8b296" stroke-width="2"/>
      <path d="M70 64C74 62 79 63 80 66C78 70 72 69 70 64Z" fill="#c44a3c"/>
      <!-- jacket -->
      <path d="M8 120C10 102 30 94 50 90L58 104L56 140L66 176L22 190L10 168Z" fill="#eeeeea"/>
      <path d="M76 88C90 92 112 100 120 112C126 134 124 160 118 176L60 190L56 150L70 120Z" fill="#f3f3f0"/>
      <path d="M76 88L96 100L92 130L74 150L64 134L72 104Z" fill="#fbfbf9"/>
      <path d="M50 90L58 104L54 132L44 108Z" fill="#dcdcd6"/>
      <path d="M104 104C114 112 118 130 114 168L100 172C106 148 106 124 98 108Z" fill="#cfcfca"/>
      <path d="M14 150L30 146L34 176L22 186Z" fill="#d9d9d4"/>
      <path d="M52 98L62 88L77 85L81 102L67 140L58 140Z" fill="#d19f80"/>
      <path d="M58 92L70 88L66 120L60 138Z" fill="#e2b494"/>
      <!-- strap -->
      <path d="M91 92L95 94L100 210H95Z" fill="#17181a"/>
      <!-- hands -->
      <path d="M20 150C28 140 42 134 50 138L56 150C54 164 40 176 26 178C18 172 16 160 20 150Z" fill="#dca98a"/>
      <path d="M56 140C62 132 72 136 76 144C78 158 72 172 62 178C54 172 50 156 56 140Z" fill="#d9a282"/>
      <!-- shirt bottom / waist -->
      <path d="M30 178L90 172L92 188L34 194Z" fill="#e9e9e5"/>
      <path d="M40 192L88 188L86 198L46 200Z" fill="#d3a98e"/>
      <!-- jeans -->
      <path d="M16 196C30 192 40 198 60 198C76 198 86 194 90 192L94 216H14Z" fill="#a3bfd0"/>
    </g></g>
  </svg>

  <!-- photo 2 -->
  <svg class="abs" style="left:182.900px;top:169.200px" width="145.700" height="141.100" viewBox="0 0 145.700 141" preserveAspectRatio="none">
    <defs><filter id="b2" x="-5%" y="-5%" width="110%" height="110%"><feGaussianBlur stdDeviation="1.200"/></filter><clipPath id="cp2"><rect width="145.700" height="141"/></clipPath></defs>
    <g id="ph2" clip-path="url(#cp2)"><g filter="url(#b2)">
      <rect x="-5" y="-5" width="156" height="151" fill="#e5e3de"/>
      <rect x="-5" y="77" width="52" height="70" fill="#4a4b50"/>
      <rect x="-5" y="75" width="52" height="5" fill="#63656a"/>
      <!-- right: wall, door & stairs -->
      <rect x="118" y="-5" width="34" height="80" fill="#eceae6"/>
      <path d="M135 -5H151V15Z" fill="#6a5f55"/>
      <rect x="126" y="18" width="11" height="56" fill="#8d8984"/>
      <rect x="131" y="23" width="5" height="51" fill="#b1ada7"/>
      <path d="M100 70H151V146H92Z" fill="#5a5d62"/>
      <path d="M118 70H151V77H116Z" fill="#3f4146"/>
      <path d="M112 84H151V90H110Z" fill="#7a7d82"/><path d="M108 98H151V104H106Z" fill="#74777c"/><path d="M120 128H151V146H118Z" fill="#9a9da0"/>
      <!-- jeans -->
      <path d="M46 77L51 62L69 57L92 63L100 60L104 120L106 146H46L44 104Z" fill="#a9bfd2"/>
      <path d="M70 58L86 62L80 96L74 98Z" fill="#8fabc3"/>
      <path d="M46 80L50 72L54 146H46Z" fill="#8ea9c0"/>
      <path d="M94 120L104 118L106 146H98Z" fill="#b4c8d8"/>
      <!-- torso -->
      <path d="M59 -5L51 16L51 55L69 56L92 63L100 55L107 27L127 13L120 -5Z" fill="#f7f6f3"/>
      <path d="M74 -5H95L84 19Z" fill="#e1b89e"/>
      <path d="M72 -5H80L77 7Z" fill="#4a362c"/>
      <path d="M84 19L97 -3L104 4L90 44L80 40Z" fill="#fdfcfa"/>
      <path d="M62 8L72 20L68 26L60 16Z" fill="#dedcd6"/>
      <path d="M54 52L92 60L91 65L54 57Z" fill="#e6e4df"/>
      <path d="M68 57L92 63L91 66L68 60Z" fill="#d3ab92"/>
      <!-- left sleeve -->
      <path d="M51 16L53 97L58 104L76 100L69 56L62 20Z" fill="#f3f2ee"/>
      <path d="M66 40L69 56L75 98L70 100Z" fill="#dddbd5"/>
      <!-- right sleeve -->
      <path d="M127 13L122 42L111 73L98 120L89 122L76 100L93 64L100 55L107 27Z" fill="#faf9f7"/>
      <path d="M100 55L93 64L78 100L84 108L104 62Z" fill="#e4e2dc"/>
      <!-- straps -->
      <path d="M105 -5L109 -5L99 58L95 60Z" fill="#3a3638"/>
      <path d="M117 36L121 34L136 106L132 107Z" fill="#2b2a2d"/>
      <!-- hands -->
      <path d="M64 104L76 100L89 111L93 126L92 146H66L67 122Z" fill="#e5b69d"/>
      <path d="M72 118L86 146H78L69 126Z" fill="#d39d84"/>
      <path d="M80 108L94 128L92 134L78 114Z" fill="#efc7b0"/>
      <!-- bag -->
      <path d="M98 104L137 107L141 112L136 141L98 131Z" fill="#1b1b1d"/>
      <path d="M104 110L132 113L130 132L104 126Z" fill="#37373a"/>
    </g></g>
  </svg>

  <!-- photo 3 -->
  <svg class="abs" style="left:182.900px;top:317.800px" width="144.700" height="158" viewBox="0 0 144.700 158" preserveAspectRatio="none">
    <defs><filter id="b3" x="-5%" y="-5%" width="110%" height="110%"><feGaussianBlur stdDeviation="1.200"/></filter><clipPath id="cp3"><rect width="144.700" height="158"/></clipPath></defs>
    <g id="ph3" clip-path="url(#cp3)"><g filter="url(#b3)">
      <rect x="-5" y="-5" width="155" height="168" fill="#a8a9a5"/>
      <rect x="-5" y="-5" width="52" height="44" fill="#dddddb"/>
      <rect x="3" y="-5" width="10" height="17" fill="#4a4c50"/>
      <rect x="45" y="-5" width="105" height="40" fill="#3b3b3f"/>
      <path d="M-5 37H47V33H150V66L-5 50Z" fill="#484a50"/>
      <path d="M-5 49L150 64V70L-5 55Z" fill="#b9bab6"/>
      <!-- stairs -->
      <path d="M-5 72L24 86L28 100L38 104L40 118L46 122V163H-5Z" fill="#5e6165"/>
      <path d="M-5 88L26 100V104L-5 92ZM-5 108L36 118V122L-5 112ZM-5 130L44 138V142L-5 134Z" fill="#7c7f83"/>
      <path d="M58 148L100 163H70Z" fill="#84877f"/>
      <!-- hair -->
      <path d="M66 22C70 10 84 8 92 16C98 26 98 42 96 52L88 56L80 50L70 58L56 70L64 52L78 40Z" fill="#1b1718"/>
      <!-- face -->
      <path d="M62 22C66 16 76 18 78 26L80 40C76 44 70 46 64 44L60 40L61 36L58 32L62 28Z" fill="#dfb096"/>
      <path d="M60 23L76 26L75 30L61 28Z" fill="#8f8a84"/>
      <path d="M58 34L62 34L61 37Z" fill="#c5483c"/>
      <path d="M70 44L80 46L78 58L72 56Z" fill="#d9a98f"/>
      <!-- jacket -->
      <path d="M56 66C64 54 78 50 92 52C108 54 118 62 120 72L126 100L122 116L106 132L92 124L96 108L70 112L62 96L54 132L44 128C46 104 50 82 56 66Z" fill="#f6f6f4"/>
      <path d="M72 58L84 60L78 84L92 100L74 104L66 86Z" fill="#ecece8"/>
      <path d="M74 60L80 62L74 78L70 72Z" fill="#dcae94"/>
      <path d="M44 128L54 132L58 110L62 96L56 84C50 98 46 112 44 128Z" fill="#fbfbfa"/>
      <path d="M100 60C112 64 118 70 120 78L124 100L112 106L104 84Z" fill="#fdfdfc"/>
      <!-- strap / bag -->
      <path d="M88 52L92 51L100 98L97 99Z" fill="#1d1c1f"/>
      <path d="M106 116L109 114L116 128L113 130Z" fill="#2a292c"/>
      <path d="M110 126L124 122L126 152L114 158L108 150Z" fill="#19191b"/>
      <!-- waist skin -->
      <path d="M70 110L96 108L94 116L74 118Z" fill="#d6ab93"/>
      <!-- jeans -->
      <path d="M70 114C82 112 96 114 104 120L114 140L112 163H88L82 140L60 150L54 163H32C36 146 44 138 56 132L70 124Z" fill="#b6cbdc"/>
      <path d="M38 138L46 134L52 142L44 150Z" fill="#dcae94"/>
      <path d="M82 118L92 124L88 132L80 126Z" fill="#dcae94"/>
      <path d="M96 124L110 134L112 163H100Z" fill="#9fb8cc"/>
    </g></g>
  </svg>

  <div class="abs" style="left:36.600px;top:554.600px;width:140.300px;height:56.800px;background:#3b362f"></div>
  <div class="abs" style="left:188.400px;top:554.600px;width:140.300px;height:56.800px;background:#3b362f"></div>
  <div class="sn" style="left:46.8px;top:561.0px">SHOP NOW</div>
  <div class="abs" style="left:188.400px;top:566.400px;width:140.300px;text-align:center;color:#fff;font-size:16px;line-height:17px;letter-spacing:-1.150px;white-space:nowrap;-webkit-text-stroke:.3px #fff">GET 30% OFF AT</div>
  <div class="abs" style="left:188.400px;top:585.400px;width:140.300px;text-align:center;color:#fff;font-size:13.100px;line-height:15px;letter-spacing:-.95px;white-space:nowrap;-webkit-text-stroke:.3px #fff">WWW.CAPCUT.COM</div>
</div>
<div id="thumbs">
  <div class="th" style="top:17.3px"><div class="ck"></div></div>
  <div class="th" style="top:84.3px"><div class="ck"></div></div>
  <div class="th" style="top:151.3px"><div class="ck"></div></div>
  <div class="th" style="top:218.3px"><div class="ck"></div></div>
  <div class="th" style="top:285.3px"><div class="ck"></div></div>
  <div class="th" style="top:352.3px"><div class="ck"></div></div>
  <div class="th" style="top:419.3px"><div class="ck"></div></div>
  <div class="th" style="top:486.3px"><div class="ck"></div></div>
  <div class="th" style="top:553.3px"><div class="ck"></div><svg class="abs" style="left:13.200px;top:6.400px" width="41.800" height="46" viewBox="0 0 144.700 158" preserveAspectRatio="none"><use href="#ph3"/></svg></div>
  <div class="th" style="top:620.3px"><div class="ck"></div><svg class="abs" style="left:10.400px;top:6.400px" width="47.900" height="46" viewBox="0 0 145.700 141" preserveAspectRatio="none"><use href="#ph2"/></svg></div>
  <div class="th" style="top:687.3px"><div class="ck"></div><svg class="abs" style="left:18.600px;top:6.400px" width="31.200" height="46.900" viewBox="0 0 140 210.500" preserveAspectRatio="none"><use href="#ph1"/></svg></div>
</div>
<div id="bottombar">
  <svg class="abs" style="left:15.500px;top:15px" width="19" height="19" viewBox="0 0 19 19" fill="none" stroke="#16181d" stroke-width="1.900" stroke-linecap="round" stroke-linejoin="round"><rect x="2.500" y="5.600" width="10.600" height="10.600" rx="2.400"/><path d="M6 2.600H12.600C15 2.600 16.400 4 16.400 6.400V12.600"/><path d="M7.800 9.300V12.500M6.200 10.900H9.400" stroke-width="1.700"/></svg>
  <svg class="abs" style="left:57.500px;top:15px" width="19" height="19" viewBox="0 0 19 19" fill="none" stroke="#d3dbe5" stroke-width="1.700" stroke-linecap="round" stroke-linejoin="round"><path d="M2.400 6H16.600M6.800 5.600C6.800 3.600 7.800 2.600 9.500 2.600C11.200 2.600 12.200 3.600 12.200 5.600M4.200 6.200L5 14.600C5.100 15.800 5.800 16.400 7 16.400H12C13.200 16.400 13.900 15.800 14 14.600L14.800 6.200"/></svg>
  <div class="abs" style="left:91.500px;top:16.500px;width:1.400px;height:16px;background:#dfe5ea"></div>
  <svg class="abs" style="left:110px;top:14.500px" width="21" height="21" viewBox="0 0 21 21" fill="none" stroke="#16181d" stroke-width="2" stroke-linecap="round" stroke-linejoin="round"><path d="M9.600 15.400H5.200C3.600 15.400 2.700 14.500 2.700 12.900V5C2.700 3.400 3.600 2.500 5.200 2.500H14C15.600 2.500 16.500 3.400 16.500 5V9.800"/><path d="M15.400 13V18.600M12.600 15.800H18.200" stroke-width="1.700"/></svg>
  <div class="abs" style="left:135.300px;top:14.900px;font-size:14.300px;line-height:20px;font-weight:bold;color:#16181d;white-space:nowrap">Add page</div>

  <svg class="abs" style="left:1425.500px;top:17px" width="11" height="15" viewBox="0 0 11 15" fill="none" stroke="#c9d1dc" stroke-width="1.500" stroke-linecap="round" stroke-linejoin="round"><path d="M8.200 1.800L2.600 7.500L8.200 13.200"/></svg>
  <div class="abs" style="left:1461.400px;top:14.500px;font-size:15px;line-height:20px;font-weight:bold;color:#16181d;letter-spacing:-1.300px;white-space:nowrap;transform:scaleX(.92);transform-origin:0 0">1/1</div>
  <svg class="abs" style="left:1502.500px;top:17px" width="11" height="15" viewBox="0 0 11 15" fill="none" stroke="#c9d1dc" stroke-width="1.500" stroke-linecap="round" stroke-linejoin="round"><path d="M2.800 1.800L8.400 7.500L2.800 13.200"/></svg>
  <div class="abs" style="left:1536.600px;top:16.300px;width:1.400px;height:16.400px;background:#d5dce5"></div>
  <svg class="abs" style="left:1553.500px;top:14.500px" width="20" height="20" viewBox="0 0 20 20" fill="none" stroke="#16181d" stroke-width="1.900" stroke-linecap="round" stroke-linejoin="round"><rect x="2.700" y="9.200" width="13.800" height="8" rx="2"/><path d="M6.600 5L9.600 2.500L12.600 5"/></svg>
</div>

<div class="abs" style="left:410.500px;top:0;width:5.200px;height:851px;background:#000"></div>
<svg class="abs" style="left:414px;top:404px" width="9" height="53" viewBox="0 0 9 53"><path d="M1.500 0C2 4 8.200 5.500 8.200 11V42C8.200 47.500 2 49 1.500 53Z" fill="#2d2d2e"/><path d="M4.800 20.600L1 26.400L4.800 32.200" fill="none" stroke="#777" stroke-width="1.100" stroke-linecap="round" stroke-linejoin="round"/></svg>
<div class="abs" style="left:438.500px;top:57px;width:1px;height:23px;background:#e9edf1"></div>
<!-- ================= EXPORT POPOVER ================= -->
<div id="pop">
  <div class="h" style="left:33.200px;top:39.100px;font-size:16.300px;line-height:22px">Export</div>
  <div class="l" style="top:82.400px;font-size:14.700px">Format</div>
  <div class="sel" style="top:111.700px"><span style="font-size:14px">JPEG</span><svg width="15" height="10" viewBox="0 0 15 10" fill="none" stroke="#16181d" stroke-width="1.900" stroke-linecap="round" stroke-linejoin="round"><path d="M2 2.200L7.400 7.600L12.800 2.200"/></svg></div>
  <div class="l" style="top:175.400px;font-size:14.500px">Size</div>
  <div class="sel" style="top:203.700px"><b style="letter-spacing:-1.500px">1×</b><i style="margin-left:5.700px;font-size:14.850px">(1080 × 1920 px)</i><svg width="15" height="10" viewBox="0 0 15 10" fill="none" stroke="#16181d" stroke-width="1.900" stroke-linecap="round" stroke-linejoin="round"><path d="M2 2.200L7.400 7.600L12.800 2.200"/></svg></div>
  <div class="l" style="top:268px;font-size:15.100px">Quality</div>
  <div class="sel" style="top:295.700px"><b>High</b><i style="margin-left:5.600px;font-size:15.200px;letter-spacing:.06px">(274 KB – 547 KB)</i><svg width="15" height="10" viewBox="0 0 15 10" fill="none" stroke="#16181d" stroke-width="1.900" stroke-linecap="round" stroke-linejoin="round"><path d="M2 2.200L7.400 7.600L12.800 2.200"/></svg></div>
  <div class="abs" style="left:33.200px;top:357.800px;width:352.800px;height:1.200px;background:#e4e9ed"></div>
  <div class="btn" style="top:379.800px;height:41.900px;background:#20c1d8;color:#fff;font-weight:bold;font-size:14.200px">Download</div>
  <div class="btn" style="top:430.100px;height:41.500px;background:#eff3f6;color:#16181d;font-size:14.700px;line-height:42.600px;-webkit-text-stroke:.3px #16181d">Copy as PNG</div>
</div>
<div id="red"></div>

</body>
</html>
